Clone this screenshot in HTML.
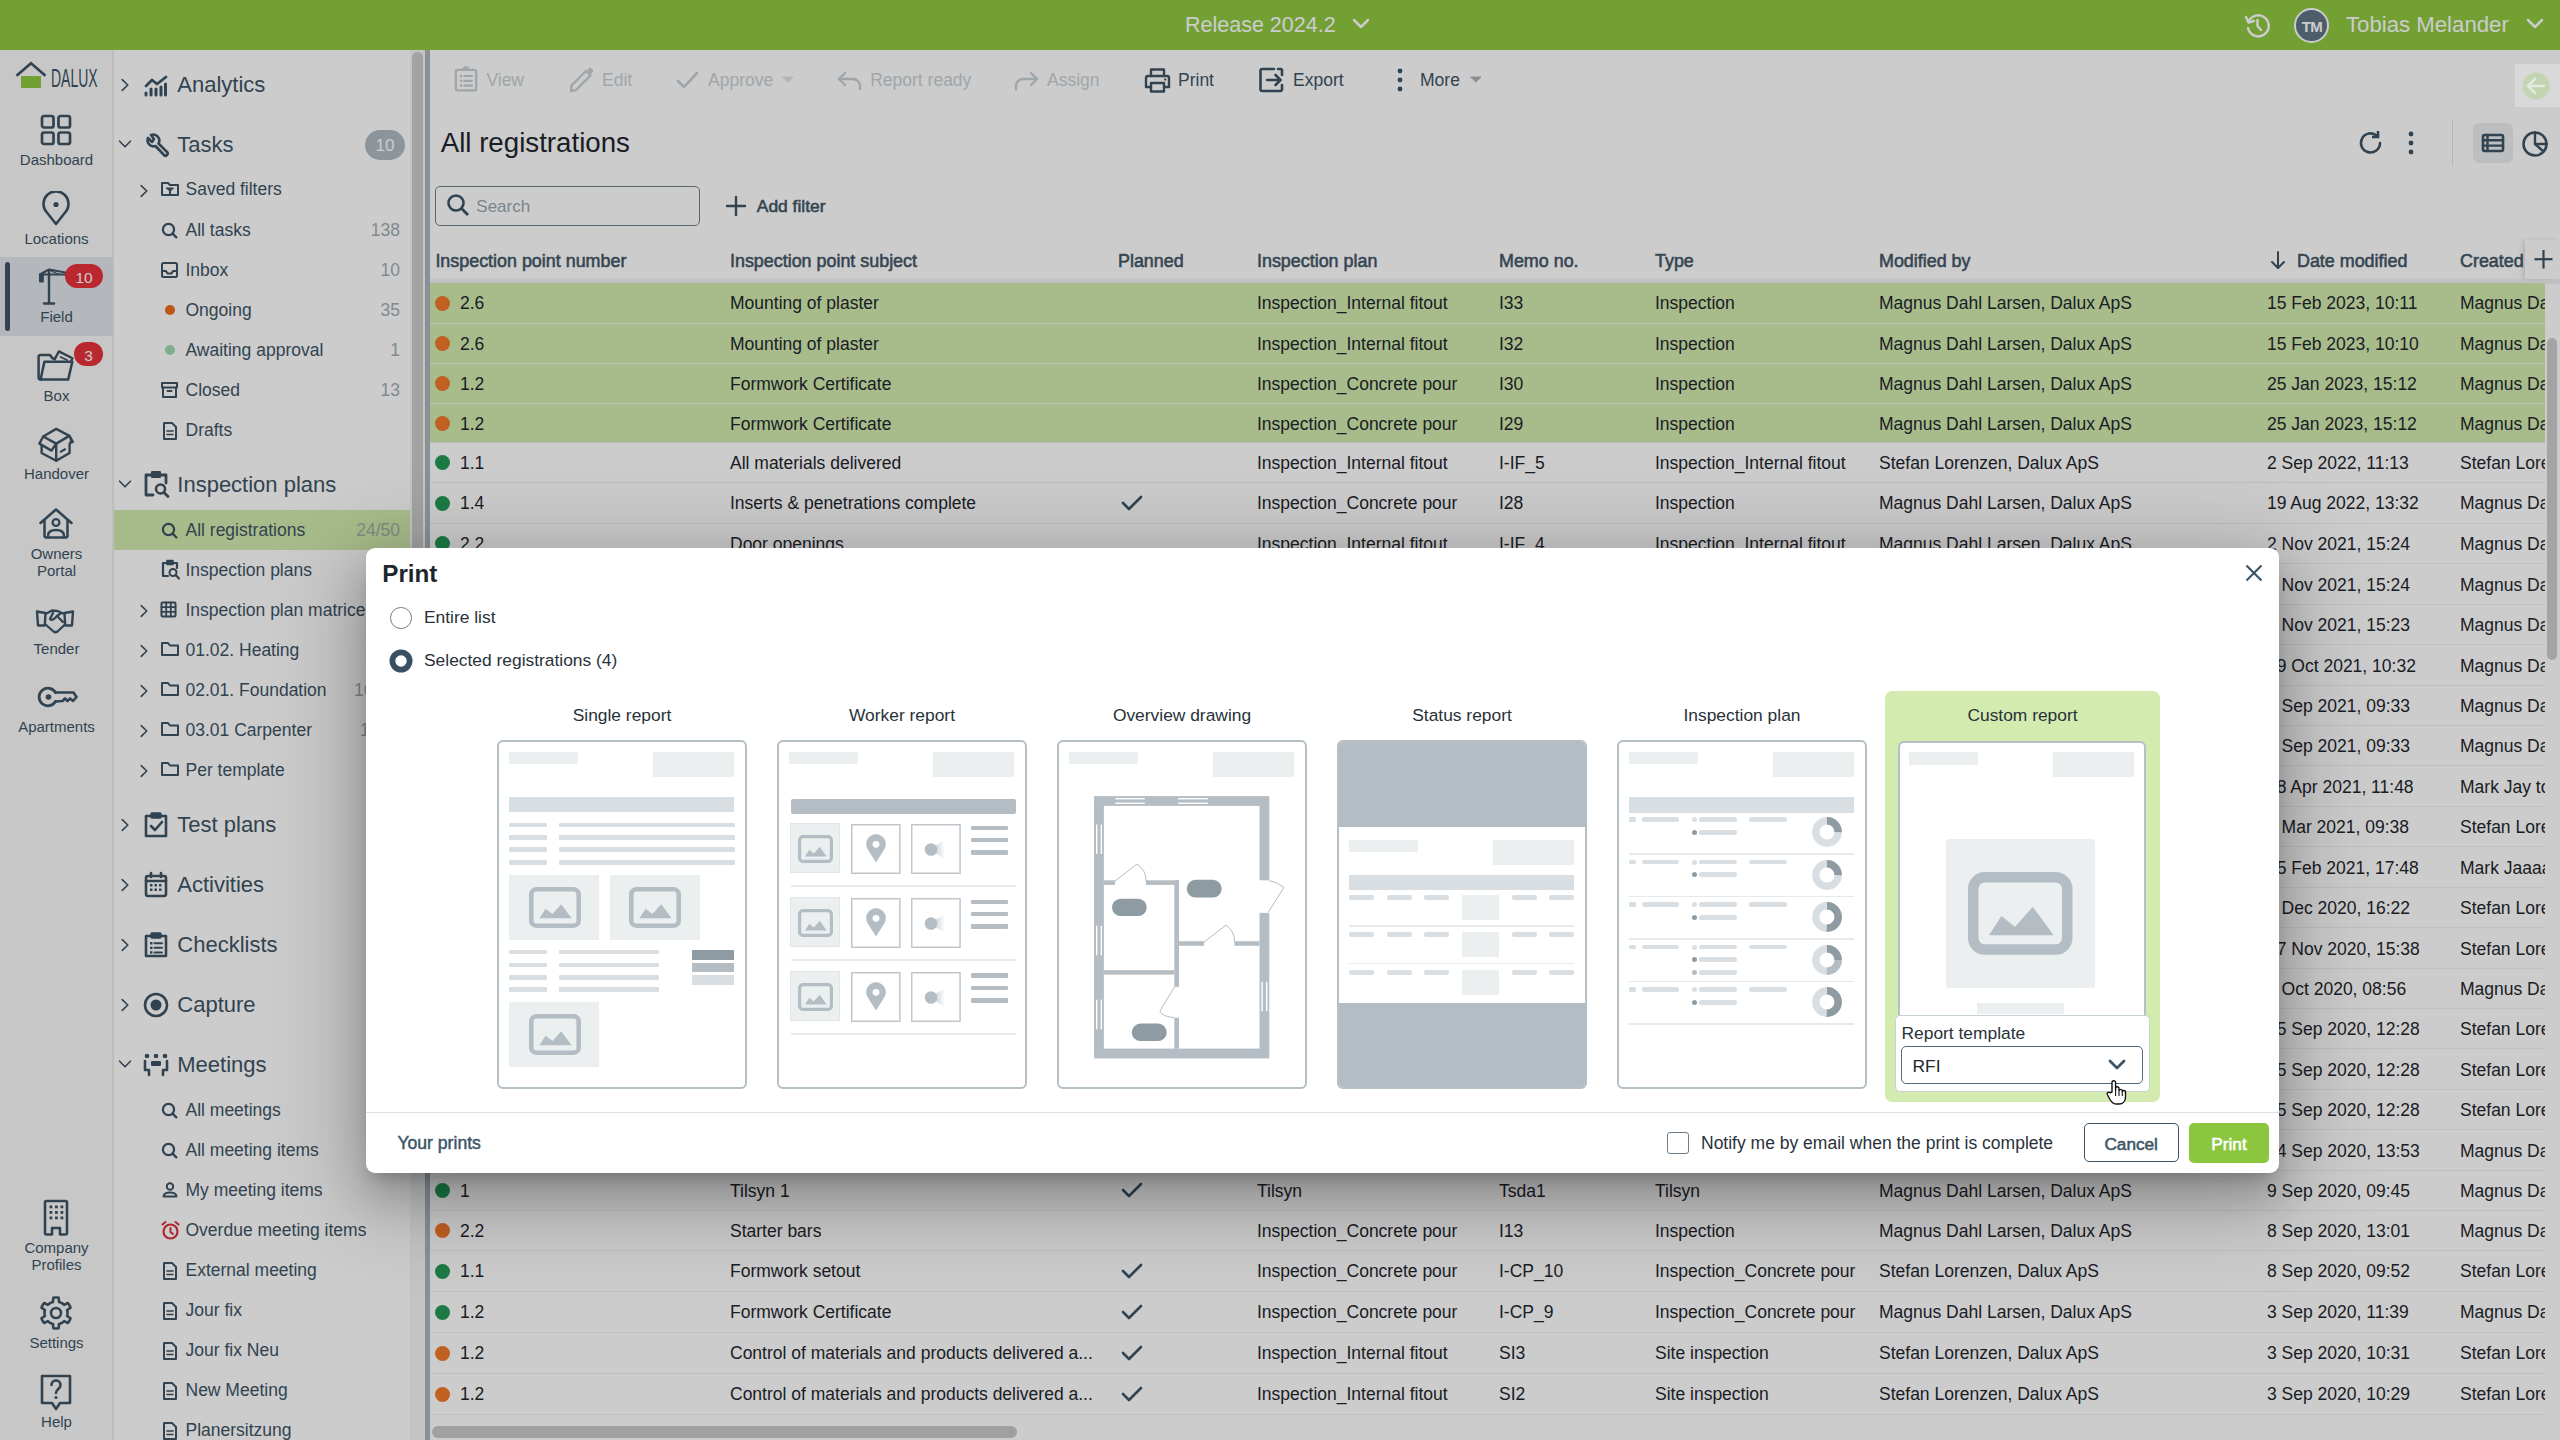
<!DOCTYPE html><html><head><meta charset="utf-8"><style>
html,body{margin:0;padding:0;}
body{width:2560px;height:1440px;overflow:hidden;position:relative;background:#fff;font-family:"Liberation Sans", sans-serif;}
.t{position:absolute;white-space:nowrap;line-height:1;}
.r{position:absolute;}
</style></head><body>
<div class="r" style="left:0.00px;top:0.00px;width:2560.00px;height:50.00px;background:#8fc83f;"></div>
<div class="t" style="left:1185.00px;top:15.10px;font-size:21.5px;color:#ffffff;font-weight:400;">Release 2024.2</div>
<svg class="r" style="left:1350.00px;top:16.00px;" width="22" height="16" viewBox="0 0 22 16" fill="none" stroke="#3e5465" stroke-width="2" stroke-linecap="round" stroke-linejoin="round"><polyline points="4,4 11,11 18,4" stroke="#fff" stroke-width="2.5"/></svg>
<svg class="r" style="left:2240.00px;top:8.00px;" width="34" height="34" viewBox="0 0 34 34" fill="none" stroke="#3e5465" stroke-width="2" stroke-linecap="round" stroke-linejoin="round"><path d="M8.5 14 A10.5 10.5 0 1 1 8 20" stroke="#fff" stroke-width="2.5"/><polyline points="6,9 8.5,14.5 14,13" stroke="#fff" stroke-width="2.5"/><polyline points="17.5,12 17.5,18 21,22" stroke="#fff" stroke-width="2.5"/></svg>
<div class="r" style="left:2294px;top:8px;width:31px;height:31px;border-radius:50%;background:#607686;border:2.5px solid #fff;"></div>
<div class="t" style="left:1812.00px;width:1000px;text-align:center;top:19.10px;font-size:15px;color:#ffffff;font-weight:700;letter-spacing:-0.5px;">TM</div>
<div class="t" style="left:2346.00px;top:13.71px;font-size:22.2px;color:#ffffff;font-weight:400;">Tobias Melander</div>
<svg class="r" style="left:2524.00px;top:16.00px;" width="22" height="16" viewBox="0 0 22 16" fill="none" stroke="#3e5465" stroke-width="2" stroke-linecap="round" stroke-linejoin="round"><polyline points="4,4 11,11 18,4" stroke="#fff" stroke-width="2.5"/></svg>
<div class="r" style="left:0.00px;top:50.00px;width:113.00px;height:1390.00px;background:#f9f9f9;"></div>
<div class="r" style="left:112.00px;top:50.00px;width:1.50px;height:1390.00px;background:#eeeeee;"></div>
<svg class="r" style="left:10.00px;top:58.00px;" width="44" height="34" viewBox="0 0 44 34" fill="none" stroke="#3e5465" stroke-width="2" stroke-linecap="round" stroke-linejoin="round"><polyline points="6.5,17.8 21,5.3 35.5,17.8" stroke-width="2.7" stroke-linecap="butt" stroke-linejoin="miter"/><rect x="11" y="18" width="20" height="12" fill="#8fc83f" stroke="none"/></svg>
<div class="t" style="left:51px;top:66px;font-size:25px;color:#3e5465;transform:scaleX(0.56);transform-origin:0 0;letter-spacing:0px;">DALUX</div>
<svg class="r" style="left:40.00px;top:114.00px;stroke-width:2.7" width="32" height="32" viewBox="0 0 32 32" fill="none" stroke="#3e5465" stroke-width="2" stroke-linecap="round" stroke-linejoin="round"><rect x="2" y="2" width="11.5" height="11.5" rx="2"/><rect x="18.5" y="2" width="11.5" height="11.5" rx="2"/><rect x="2" y="18.5" width="11.5" height="11.5" rx="2"/><rect x="18.5" y="18.5" width="11.5" height="11.5" rx="2"/></svg>
<div class="t" style="left:-443.50px;width:1000px;text-align:center;top:152.30px;font-size:15px;color:#3e5465;font-weight:400;">Dashboard</div>
<svg class="r" style="left:40.00px;top:191.00px;" width="32" height="36" viewBox="0 0 32 36" fill="none" stroke="#3e5465" stroke-width="2" stroke-linecap="round" stroke-linejoin="round"><path d="M16 33 L6.5 21 A12.5 12.5 0 1 1 25.5 21 Z" stroke-width="2.6"/><circle cx="16" cy="13.5" r="2.6" fill="#3e5465" stroke="none"/></svg>
<div class="t" style="left:-443.50px;width:1000px;text-align:center;top:231.30px;font-size:15px;color:#3e5465;font-weight:400;">Locations</div>
<div class="r" style="left:0.00px;top:257.00px;width:113.00px;height:79.00px;background:#e2e6eb;"></div>
<div class="r" style="left:5.00px;top:262.00px;width:5.00px;height:69.00px;background:#3e5465;border-radius:3px;"></div>
<svg class="r" style="left:30.00px;top:260.00px;" width="50" height="50" viewBox="0 0 50 50" fill="none" stroke="#3e5465" stroke-width="2" stroke-linecap="round" stroke-linejoin="round"><line x1="19" y1="12" x2="19" y2="43" stroke-width="2.4"/><line x1="14" y1="43.5" x2="24" y2="43.5" stroke-width="2.4"/><polyline points="10,14.5 19,9.5 38,13" stroke-width="2.2"/><line x1="10" y1="14.5" x2="38" y2="14.5" stroke-width="2.2"/><rect x="9" y="14" width="4.8" height="8.5" rx="1.2" fill="#3e5465" stroke="none"/><line x1="19" y1="10" x2="29" y2="14.5" stroke-width="1.2"/></svg>
<div class="r" style="left:65px;top:264px;width:38px;height:24px;border-radius:12px;background:#e8323a;"></div>
<div class="t" style="left:-416.00px;width:1000px;text-align:center;top:270.18px;font-size:15.5px;color:#ffffff;font-weight:400;">10</div>
<div class="t" style="left:-443.50px;width:1000px;text-align:center;top:309.30px;font-size:15px;color:#3e5465;font-weight:400;">Field</div>
<svg class="r" style="left:30.00px;top:340.00px;" width="50" height="50" viewBox="0 0 50 50" fill="none" stroke="#3e5465" stroke-width="2" stroke-linecap="round" stroke-linejoin="round"><path d="M10.6 39.6 Q8.6 39.6 8.6 37.6 L8.6 16.8 Q8.6 14.9 10.6 14.9 L19.8 14.9 L22.6 18.4 L24.4 18.4" stroke-width="2.5"/><path d="M10.6 39.6 L14.4 21.8 L42.3 21.8 L38.2 39.6 Z" stroke-width="2.5"/><path d="M24.6 19.4 L28.9 11.4 L42.4 18.2 L41.4 21" stroke-width="2.4"/><line x1="30.5" y1="17" x2="37" y2="20" stroke-width="1.8"/></svg>
<div class="r" style="left:74px;top:342px;width:29px;height:24px;border-radius:12px;background:#e8323a;"></div>
<div class="t" style="left:-411.50px;width:1000px;text-align:center;top:348.18px;font-size:15.5px;color:#ffffff;font-weight:400;">3</div>
<div class="t" style="left:-443.50px;width:1000px;text-align:center;top:388.30px;font-size:15px;color:#3e5465;font-weight:400;">Box</div>
<svg class="r" style="left:30.00px;top:420.00px;" width="50" height="50" viewBox="0 0 50 50" fill="none" stroke="#3e5465" stroke-width="2" stroke-linecap="round" stroke-linejoin="round"><path d="M13.2 16.5 L26.2 8.9 L39.4 15.9 L26.2 23.6 Z" stroke-width="2.4"/><path d="M13.2 16.5 L9.4 23.6 L21.5 30.6 L26.2 23.6" stroke-width="2.4"/><path d="M11.6 26 L11.6 33 L26.2 40.8 L39.6 33 L39.6 24" stroke-width="2.4"/><line x1="26.2" y1="23.6" x2="26.2" y2="40.8" stroke-width="2.4"/><path d="M39.4 15.9 L42.8 21.8 L40 23" stroke-width="2.4" fill="#3e5465"/><line x1="30.8" y1="31.6" x2="35" y2="29.3" stroke-width="2.2"/></svg>
<div class="t" style="left:-443.50px;width:1000px;text-align:center;top:466.30px;font-size:15px;color:#3e5465;font-weight:400;">Handover</div>
<svg class="r" style="left:30.00px;top:500.00px;" width="52" height="44" viewBox="0 0 52 44" fill="none" stroke="#3e5465" stroke-width="2" stroke-linecap="round" stroke-linejoin="round"><polyline points="10.5,23 26,9.5 41.5,23" stroke-width="2.5"/><path d="M14.5 20 L14.5 35.5 Q14.5 37.5 16.5 37.5 L35.5 37.5 Q37.5 37.5 37.5 35.5 L37.5 20" stroke-width="2.5"/><circle cx="26" cy="22.5" r="3.4" stroke-width="2.3"/><path d="M18 36 Q18 30 26 30 Q34 30 34 36" stroke-width="2.3"/></svg>
<div class="t" style="left:-443.50px;width:1000px;text-align:center;top:545.80px;font-size:15px;color:#3e5465;font-weight:400;">Owners</div>
<div class="t" style="left:-443.50px;width:1000px;text-align:center;top:562.80px;font-size:15px;color:#3e5465;font-weight:400;">Portal</div>
<svg class="r" style="left:30.00px;top:600.00px;" width="50" height="40" viewBox="0 0 50 40" fill="none" stroke="#3e5465" stroke-width="2" stroke-linecap="round" stroke-linejoin="round"><path d="M7 11.5 L15.5 13 L14.8 25.5 L8 25.5 Z" stroke-width="2.4"/><path d="M43 11.5 L34.5 13 L35.2 25.5 L42 25.5 Z" stroke-width="2.4"/><path d="M15.5 14 L22 10.5 L27.5 11 L34.5 14 M15 24 L23.5 31.5 Q25.5 33 27.5 31.5 L35 24.5 M23 13 L20 19 Q22 21 24.5 18.5 L27 16 L33 22 M27 16 L31 13" stroke-width="2.3"/></svg>
<div class="t" style="left:-443.50px;width:1000px;text-align:center;top:641.30px;font-size:15px;color:#3e5465;font-weight:400;">Tender</div>
<svg class="r" style="left:33.00px;top:680.00px;" width="50" height="34" viewBox="0 0 50 34" fill="none" stroke="#3e5465" stroke-width="2" stroke-linecap="round" stroke-linejoin="round"><path d="M22.5 12.5 A8.8 8.8 0 1 0 22.5 21.5" stroke-width="2.8"/><circle cx="15.5" cy="17" r="2.8" fill="#3e5465" stroke="none"/><path d="M22.5 12.5 L40.5 12.5 L43.5 17 L40 21 L37 18.5 L34.5 21 L32 18.5 L29.5 21 L22.5 21.5" stroke-width="2.6"/></svg>
<div class="t" style="left:-443.50px;width:1000px;text-align:center;top:719.30px;font-size:15px;color:#3e5465;font-weight:400;">Apartments</div>
<svg class="r" style="left:40.00px;top:1198.00px;" width="32" height="40" viewBox="0 0 32 40" fill="none" stroke="#3e5465" stroke-width="2" stroke-linecap="round" stroke-linejoin="round"><path d="M5 35 L5 4.5 Q5 3 6.5 3 L25.5 3 Q27 3 27 4.5 L27 35 Q27 36.5 25.5 36.5 L20 36.5 L20 30 L12 30 L12 36.5 L6.5 36.5 Q5 36.5 5 35 Z" stroke-width="2.6"/><rect x="9.5" y="7.5" width="2.8" height="2.8" fill="#3e5465" stroke="none"/><rect x="15.0" y="7.5" width="2.8" height="2.8" fill="#3e5465" stroke="none"/><rect x="20.5" y="7.5" width="2.8" height="2.8" fill="#3e5465" stroke="none"/><rect x="9.5" y="13.0" width="2.8" height="2.8" fill="#3e5465" stroke="none"/><rect x="15.0" y="13.0" width="2.8" height="2.8" fill="#3e5465" stroke="none"/><rect x="20.5" y="13.0" width="2.8" height="2.8" fill="#3e5465" stroke="none"/><rect x="9.5" y="18.5" width="2.8" height="2.8" fill="#3e5465" stroke="none"/><rect x="15.0" y="18.5" width="2.8" height="2.8" fill="#3e5465" stroke="none"/><rect x="20.5" y="18.5" width="2.8" height="2.8" fill="#3e5465" stroke="none"/></svg>
<div class="t" style="left:-443.50px;width:1000px;text-align:center;top:1240.30px;font-size:15px;color:#3e5465;font-weight:400;">Company</div>
<div class="t" style="left:-443.50px;width:1000px;text-align:center;top:1257.30px;font-size:15px;color:#3e5465;font-weight:400;">Profiles</div>
<svg class="r" style="left:38.00px;top:1295.00px;" width="36" height="36" viewBox="0 0 36 36" fill="none" stroke="#3e5465" stroke-width="2" stroke-linecap="round" stroke-linejoin="round"><polygon points="18.00,2.50 19.35,2.56 20.69,2.74 20.98,6.89 21.93,7.19 22.86,7.58 23.75,8.04 24.60,8.58 25.39,9.19 26.13,9.87 29.87,8.04 30.70,9.11 31.42,10.25 32.05,11.45 32.57,12.70 29.11,15.02 29.33,16.00 29.46,17.00 29.50,18.00 29.46,19.00 29.33,20.00 29.11,20.98 32.57,23.30 32.05,24.55 31.42,25.75 30.70,26.89 29.87,27.96 26.13,26.13 25.39,26.81 24.60,27.42 23.75,27.96 22.86,28.42 21.93,28.81 20.98,29.11 20.69,33.26 19.35,33.44 18.00,33.50 16.65,33.44 15.31,33.26 15.02,29.11 14.07,28.81 13.14,28.42 12.25,27.96 11.40,27.42 10.61,26.81 9.87,26.13 6.13,27.96 5.30,26.89 4.58,25.75 3.95,24.55 3.43,23.30 6.89,20.98 6.67,20.00 6.54,19.00 6.50,18.00 6.54,17.00 6.67,16.00 6.89,15.02 3.43,12.70 3.95,11.45 4.58,10.25 5.30,9.11 6.13,8.04 9.87,9.87 10.61,9.19 11.40,8.58 12.25,8.04 13.14,7.58 14.07,7.19 15.02,6.89 15.31,2.74 16.65,2.56" stroke-width="2.6"/><circle cx="18" cy="18" r="5" stroke-width="2.6"/></svg>
<div class="t" style="left:-443.50px;width:1000px;text-align:center;top:1335.30px;font-size:15px;color:#3e5465;font-weight:400;">Settings</div>
<svg class="r" style="left:38.00px;top:1373.00px;" width="36" height="40" viewBox="0 0 36 40" fill="none" stroke="#3e5465" stroke-width="2" stroke-linecap="round" stroke-linejoin="round"><path d="M4 3 L32 3 L32 30 L22 30 L18 36 L14 30 L4 30 Z" stroke-width="2.6"/><path d="M13.5 12 C13.5 6 22.5 6 22.5 12 C22.5 16 18 16 18 20" stroke-width="2.6"/><circle cx="18" cy="24.5" r="1.6" fill="#3e5465" stroke="none"/></svg>
<div class="t" style="left:-443.50px;width:1000px;text-align:center;top:1414.30px;font-size:15px;color:#3e5465;font-weight:400;">Help</div>
<div class="r" style="left:113.50px;top:50.00px;width:296.50px;height:1390.00px;background:#ffffff;"></div>
<div class="r" style="left:410.00px;top:50.00px;width:15.00px;height:1390.00px;background:#f6f6f6;"></div>
<div class="r" style="left:412.00px;top:52.00px;width:11.00px;height:950.00px;background:#cccccc;border-radius:6px;"></div>
<div class="r" style="left:425.00px;top:50.00px;width:5.00px;height:1390.00px;background:#acb5be;"></div>
<svg class="r" style="left:119.00px;top:77.00px;" width="12" height="16" viewBox="0 0 12 16" fill="none" stroke="#3e5465" stroke-width="2" stroke-linecap="round" stroke-linejoin="round"><polyline points="3.2,2.6 8.8,8 3.2,13.4" stroke-width="1.6"/></svg>
<svg class="r" style="left:143.00px;top:74.00px;" width="26" height="24" viewBox="0 0 26 24" fill="none" stroke="#3e5465" stroke-width="2" stroke-linecap="round" stroke-linejoin="round"><polyline points="3,12 9,6 14,10 23,3" stroke-width="2.8"/><line x1="3" y1="19" x2="3" y2="21" stroke-width="3"/><line x1="8" y1="15" x2="8" y2="21" stroke-width="3"/><line x1="13" y1="15" x2="13" y2="21" stroke-width="3"/><line x1="18" y1="13" x2="18" y2="21" stroke-width="3"/><line x1="22.5" y1="10" x2="22.5" y2="21" stroke-width="3"/></svg>
<div class="t" style="left:177.30px;top:74.18px;font-size:22px;color:#3e5465;font-weight:400;">Analytics</div>
<svg class="r" style="left:117.00px;top:138.00px;" width="16" height="12" viewBox="0 0 16 12" fill="none" stroke="#3e5465" stroke-width="2" stroke-linecap="round" stroke-linejoin="round"><polyline points="2.6,3.2 8,8.8 13.4,3.2" stroke-width="1.6"/></svg>
<svg class="r" style="left:143.00px;top:132.00px;" width="26" height="26" viewBox="0 0 26 26" fill="none" stroke="#3e5465" stroke-width="2" stroke-linecap="round" stroke-linejoin="round"><path d="M5 6 A6 6 0 0 0 12.5 14 L21 23 A2 2 0 0 0 24 20 L15.5 11.5 A6 6 0 0 0 8 3 L11 7 L9 10 Z" stroke-width="2.6"/></svg>
<div class="t" style="left:177.30px;top:133.68px;font-size:22px;color:#3e5465;font-weight:400;">Tasks</div>
<div class="r" style="left:365px;top:129.5px;width:40px;height:30.5px;border-radius:15.25px;background:#afbbc4;"></div>
<div class="t" style="left:-115.00px;width:1000px;text-align:center;top:137.41px;font-size:17px;color:#ffffff;font-weight:400;">10</div>
<svg class="r" style="left:137.50px;top:182.50px;" width="12" height="16" viewBox="0 0 12 16" fill="none" stroke="#3e5465" stroke-width="2" stroke-linecap="round" stroke-linejoin="round"><polyline points="3.2,2.6 8.8,8 3.2,13.4" stroke-width="1.6"/></svg>
<svg class="r" style="left:160.00px;top:180.50px;" width="20" height="16" viewBox="0 0 20 16" fill="none" stroke="#3e5465" stroke-width="2" stroke-linecap="round" stroke-linejoin="round"><path d="M2 14 L2 2 L8 2 L10 4 L18 4 L18 14 Z" stroke-width="2"/><path d="M6.5 7 L13.5 7 L10.5 10 L10.5 13 L9.5 13 L9.5 10 Z" fill="#3e5465" stroke-width="1"/></svg>
<div class="t" style="left:185.50px;top:181.49px;font-size:17.5px;color:#3e5465;font-weight:400;">Saved filters</div>
<svg class="r" style="left:160.00px;top:221.00px;" width="20" height="20" viewBox="0 0 20 20" fill="none" stroke="#3e5465" stroke-width="2" stroke-linecap="round" stroke-linejoin="round"><circle cx="8.5" cy="8.5" r="5.6" stroke-width="2.2"/><line x1="12.6" y1="12.6" x2="17" y2="17" stroke-width="2.4" stroke-linecap="butt"/></svg>
<div class="t" style="left:185.50px;top:221.99px;font-size:17.5px;color:#3e5465;font-weight:400;">All tasks</div>
<div class="t" style="left:-600.00px;width:1000px;text-align:right;top:221.99px;font-size:17.5px;color:#a2adb5;font-weight:400;">138</div>
<svg class="r" style="left:160.00px;top:261.00px;" width="20" height="18" viewBox="0 0 20 18" fill="none" stroke="#3e5465" stroke-width="2" stroke-linecap="round" stroke-linejoin="round"><rect x="2" y="2" width="15" height="14" rx="1.5" stroke-width="2"/><polyline points="2,10 6,10 7.5,12.5 11.5,12.5 13,10 17,10" stroke-width="2"/></svg>
<div class="t" style="left:185.50px;top:261.99px;font-size:17.5px;color:#3e5465;font-weight:400;">Inbox</div>
<div class="t" style="left:-600.00px;width:1000px;text-align:right;top:261.99px;font-size:17.5px;color:#a2adb5;font-weight:400;">10</div>
<div class="r" style="left:165px;top:304.50px;width:10px;height:10px;border-radius:50%;background:#ee6a1d;"></div>
<div class="t" style="left:185.50px;top:301.99px;font-size:17.5px;color:#3e5465;font-weight:400;">Ongoing</div>
<div class="t" style="left:-600.00px;width:1000px;text-align:right;top:301.99px;font-size:17.5px;color:#a2adb5;font-weight:400;">35</div>
<div class="r" style="left:165px;top:344.50px;width:10px;height:10px;border-radius:50%;background:#9edcb2;"></div>
<div class="t" style="left:185.50px;top:341.99px;font-size:17.5px;color:#3e5465;font-weight:400;">Awaiting approval</div>
<div class="t" style="left:-600.00px;width:1000px;text-align:right;top:341.99px;font-size:17.5px;color:#a2adb5;font-weight:400;">1</div>
<svg class="r" style="left:160.00px;top:381.00px;" width="20" height="18" viewBox="0 0 20 18" fill="none" stroke="#3e5465" stroke-width="2" stroke-linecap="round" stroke-linejoin="round"><rect x="2" y="2" width="15" height="4.5" stroke-width="2"/><path d="M3 6.5 L3 16 L16 16 L16 6.5" stroke-width="2"/><line x1="7.5" y1="10" x2="11.5" y2="10" stroke-width="2"/></svg>
<div class="t" style="left:185.50px;top:381.99px;font-size:17.5px;color:#3e5465;font-weight:400;">Closed</div>
<div class="t" style="left:-600.00px;width:1000px;text-align:right;top:381.99px;font-size:17.5px;color:#a2adb5;font-weight:400;">13</div>
<svg class="r" style="left:161.00px;top:420.50px;" width="18" height="20" viewBox="0 0 18 20" fill="none" stroke="#3e5465" stroke-width="2" stroke-linecap="round" stroke-linejoin="round"><path d="M3 2 L11 2 L15 6 L15 18 L3 18 Z" stroke-width="2"/><line x1="6" y1="10" x2="12" y2="10" stroke-width="1.6"/><line x1="6" y1="13.5" x2="12" y2="13.5" stroke-width="1.6"/></svg>
<div class="t" style="left:185.50px;top:421.99px;font-size:17.5px;color:#3e5465;font-weight:400;">Drafts</div>
<svg class="r" style="left:117.00px;top:478.00px;" width="16" height="12" viewBox="0 0 16 12" fill="none" stroke="#3e5465" stroke-width="2" stroke-linecap="round" stroke-linejoin="round"><polyline points="2.6,3.2 8,8.8 13.4,3.2" stroke-width="1.6"/></svg>
<svg class="r" style="left:143.00px;top:470.00px;" width="28" height="28" viewBox="0 0 28 28" fill="none" stroke="#3e5465" stroke-width="2" stroke-linecap="round" stroke-linejoin="round"><path d="M10 25 L3 25 L3 5 L23 5 L23 13" stroke-width="2.8"/><rect x="9" y="2" width="8" height="5" fill="#3e5465" stroke-width="2"/><circle cx="17.5" cy="19" r="4.5" stroke-width="2.6"/><line x1="21" y1="22.5" x2="25" y2="26.5" stroke-width="2.8"/></svg>
<div class="t" style="left:177.30px;top:474.28px;font-size:22px;color:#3e5465;font-weight:400;">Inspection plans</div>
<div class="r" style="left:113.50px;top:510.00px;width:296.50px;height:39.75px;background:#d3ebae;"></div>
<svg class="r" style="left:160.00px;top:520.90px;" width="20" height="20" viewBox="0 0 20 20" fill="none" stroke="#3e5465" stroke-width="2" stroke-linecap="round" stroke-linejoin="round"><circle cx="8.5" cy="8.5" r="5.6" stroke-width="2.2"/><line x1="12.6" y1="12.6" x2="17" y2="17" stroke-width="2.4" stroke-linecap="butt"/></svg>
<div class="t" style="left:185.50px;top:521.89px;font-size:17.5px;color:#3e5465;font-weight:400;">All registrations</div>
<div class="t" style="left:-600.00px;width:1000px;text-align:right;top:521.89px;font-size:17.5px;color:#9fb0a3;font-weight:400;">24/50</div>
<svg class="r" style="left:159.50px;top:558.60px;" width="22" height="22" viewBox="0 0 22 22" fill="none" stroke="#3e5465" stroke-width="2" stroke-linecap="round" stroke-linejoin="round"><path d="M8 17 L3 17 L3 4 L17 4 L17 9" stroke-width="2.2"/><rect x="7" y="1.5" width="6" height="4" fill="#3e5465" stroke-width="1.5"/><circle cx="13" cy="13.5" r="3.5" stroke-width="2"/><line x1="15.6" y1="16" x2="19" y2="19.5" stroke-width="2.2"/></svg>
<div class="t" style="left:185.50px;top:561.59px;font-size:17.5px;color:#3e5465;font-weight:400;">Inspection plans</div>
<svg class="r" style="left:137.50px;top:602.60px;" width="12" height="16" viewBox="0 0 12 16" fill="none" stroke="#3e5465" stroke-width="2" stroke-linecap="round" stroke-linejoin="round"><polyline points="3.2,2.6 8.8,8 3.2,13.4" stroke-width="1.6"/></svg>
<svg class="r" style="left:160.00px;top:600.60px;" width="18" height="18" viewBox="0 0 18 18" fill="none" stroke="#3e5465" stroke-width="2" stroke-linecap="round" stroke-linejoin="round"><rect x="1.5" y="1.5" width="14" height="14" rx="1" stroke-width="2"/><line x1="6.2" y1="1.5" x2="6.2" y2="15.5" stroke-width="1.8"/><line x1="10.8" y1="1.5" x2="10.8" y2="15.5" stroke-width="1.8"/><line x1="1.5" y1="6.2" x2="15.5" y2="6.2" stroke-width="1.8"/><line x1="1.5" y1="10.8" x2="15.5" y2="10.8" stroke-width="1.8"/></svg>
<div class="t" style="left:185.50px;top:601.59px;font-size:17.5px;color:#3e5465;font-weight:400;">Inspection plan matrices</div>
<svg class="r" style="left:137.50px;top:642.60px;" width="12" height="16" viewBox="0 0 12 16" fill="none" stroke="#3e5465" stroke-width="2" stroke-linecap="round" stroke-linejoin="round"><polyline points="3.2,2.6 8.8,8 3.2,13.4" stroke-width="1.6"/></svg>
<svg class="r" style="left:160.00px;top:640.60px;" width="20" height="16" viewBox="0 0 20 16" fill="none" stroke="#3e5465" stroke-width="2" stroke-linecap="round" stroke-linejoin="round"><path d="M2 14 L2 2 L8 2 L10 4.5 L18 4.5 L18 14 Z" stroke-width="2"/></svg>
<div class="t" style="left:185.50px;top:641.59px;font-size:17.5px;color:#3e5465;font-weight:400;">01.02. Heating</div>
<div class="t" style="left:-600.00px;width:1000px;text-align:right;top:641.59px;font-size:17.5px;color:#a2adb5;font-weight:400;">4</div>
<svg class="r" style="left:137.50px;top:682.60px;" width="12" height="16" viewBox="0 0 12 16" fill="none" stroke="#3e5465" stroke-width="2" stroke-linecap="round" stroke-linejoin="round"><polyline points="3.2,2.6 8.8,8 3.2,13.4" stroke-width="1.6"/></svg>
<svg class="r" style="left:160.00px;top:680.60px;" width="20" height="16" viewBox="0 0 20 16" fill="none" stroke="#3e5465" stroke-width="2" stroke-linecap="round" stroke-linejoin="round"><path d="M2 14 L2 2 L8 2 L10 4.5 L18 4.5 L18 14 Z" stroke-width="2"/></svg>
<div class="t" style="left:185.50px;top:681.59px;font-size:17.5px;color:#3e5465;font-weight:400;">02.01. Foundation</div>
<div class="t" style="left:354.00px;top:681.59px;font-size:17.5px;color:#a2adb5;font-weight:400;">16</div>
<div class="t" style="left:360.00px;top:721.59px;font-size:17.5px;color:#a2adb5;font-weight:400;">1</div>
<svg class="r" style="left:137.50px;top:722.60px;" width="12" height="16" viewBox="0 0 12 16" fill="none" stroke="#3e5465" stroke-width="2" stroke-linecap="round" stroke-linejoin="round"><polyline points="3.2,2.6 8.8,8 3.2,13.4" stroke-width="1.6"/></svg>
<svg class="r" style="left:160.00px;top:720.60px;" width="20" height="16" viewBox="0 0 20 16" fill="none" stroke="#3e5465" stroke-width="2" stroke-linecap="round" stroke-linejoin="round"><path d="M2 14 L2 2 L8 2 L10 4.5 L18 4.5 L18 14 Z" stroke-width="2"/></svg>
<div class="t" style="left:185.50px;top:721.59px;font-size:17.5px;color:#3e5465;font-weight:400;">03.01 Carpenter</div>
<div class="t" style="left:-600.00px;width:1000px;text-align:right;top:721.59px;font-size:17.5px;color:#a2adb5;font-weight:400;">7</div>
<svg class="r" style="left:137.50px;top:762.60px;" width="12" height="16" viewBox="0 0 12 16" fill="none" stroke="#3e5465" stroke-width="2" stroke-linecap="round" stroke-linejoin="round"><polyline points="3.2,2.6 8.8,8 3.2,13.4" stroke-width="1.6"/></svg>
<svg class="r" style="left:160.00px;top:760.60px;" width="20" height="16" viewBox="0 0 20 16" fill="none" stroke="#3e5465" stroke-width="2" stroke-linecap="round" stroke-linejoin="round"><path d="M2 14 L2 2 L8 2 L10 4.5 L18 4.5 L18 14 Z" stroke-width="2"/></svg>
<div class="t" style="left:185.50px;top:761.59px;font-size:17.5px;color:#3e5465;font-weight:400;">Per template</div>
<svg class="r" style="left:119.00px;top:817.00px;" width="12" height="16" viewBox="0 0 12 16" fill="none" stroke="#3e5465" stroke-width="2" stroke-linecap="round" stroke-linejoin="round"><polyline points="3.2,2.6 8.8,8 3.2,13.4" stroke-width="1.6"/></svg>
<svg class="r" style="left:143.00px;top:811.00px;" width="26" height="28" viewBox="0 0 26 28" fill="none" stroke="#3e5465" stroke-width="2" stroke-linecap="round" stroke-linejoin="round"><path d="M7 5 L3 5 L3 25 L23 25 L23 5 L19 5" stroke-width="2.6"/><rect x="8" y="2" width="10" height="5" rx="1" fill="#3e5465" stroke-width="1.6"/><polyline points="8,15 12,19 19,11" stroke-width="2.6"/></svg>
<div class="t" style="left:177.30px;top:814.18px;font-size:22px;color:#3e5465;font-weight:400;">Test plans</div>
<svg class="r" style="left:119.00px;top:877.00px;" width="12" height="16" viewBox="0 0 12 16" fill="none" stroke="#3e5465" stroke-width="2" stroke-linecap="round" stroke-linejoin="round"><polyline points="3.2,2.6 8.8,8 3.2,13.4" stroke-width="1.6"/></svg>
<svg class="r" style="left:143.00px;top:871.00px;" width="26" height="28" viewBox="0 0 26 28" fill="none" stroke="#3e5465" stroke-width="2" stroke-linecap="round" stroke-linejoin="round"><rect x="3" y="5" width="20" height="20" rx="2" stroke-width="2.6"/><line x1="3" y1="10" x2="23" y2="10" stroke-width="2.6"/><line x1="8" y1="2" x2="8" y2="6" stroke-width="2.6"/><line x1="18" y1="2" x2="18" y2="6" stroke-width="2.6"/><rect x="7.0" y="13.0" width="2.5" height="2.5" fill="#3e5465" stroke="none"/><rect x="11.5" y="13.0" width="2.5" height="2.5" fill="#3e5465" stroke="none"/><rect x="16.0" y="13.0" width="2.5" height="2.5" fill="#3e5465" stroke="none"/><rect x="7.0" y="17.5" width="2.5" height="2.5" fill="#3e5465" stroke="none"/><rect x="11.5" y="17.5" width="2.5" height="2.5" fill="#3e5465" stroke="none"/><rect x="16.0" y="17.5" width="2.5" height="2.5" fill="#3e5465" stroke="none"/></svg>
<div class="t" style="left:177.30px;top:874.18px;font-size:22px;color:#3e5465;font-weight:400;">Activities</div>
<svg class="r" style="left:119.00px;top:937.00px;" width="12" height="16" viewBox="0 0 12 16" fill="none" stroke="#3e5465" stroke-width="2" stroke-linecap="round" stroke-linejoin="round"><polyline points="3.2,2.6 8.8,8 3.2,13.4" stroke-width="1.6"/></svg>
<svg class="r" style="left:143.00px;top:931.00px;" width="26" height="28" viewBox="0 0 26 28" fill="none" stroke="#3e5465" stroke-width="2" stroke-linecap="round" stroke-linejoin="round"><path d="M7 5 L3 5 L3 25 L23 25 L23 5 L19 5" stroke-width="2.6"/><rect x="8" y="2" width="10" height="5" rx="1" fill="#3e5465" stroke-width="1.6"/><rect x="7" y="11.0" width="2.5" height="2.5" fill="#3e5465" stroke="none"/><line x1="11.5" y1="12.2" x2="19" y2="12.2" stroke-width="2"/><rect x="7" y="15.6" width="2.5" height="2.5" fill="#3e5465" stroke="none"/><line x1="11.5" y1="16.8" x2="19" y2="16.8" stroke-width="2"/><rect x="7" y="20.2" width="2.5" height="2.5" fill="#3e5465" stroke="none"/><line x1="11.5" y1="21.4" x2="19" y2="21.4" stroke-width="2"/></svg>
<div class="t" style="left:177.30px;top:934.18px;font-size:22px;color:#3e5465;font-weight:400;">Checklists</div>
<svg class="r" style="left:119.00px;top:997.00px;" width="12" height="16" viewBox="0 0 12 16" fill="none" stroke="#3e5465" stroke-width="2" stroke-linecap="round" stroke-linejoin="round"><polyline points="3.2,2.6 8.8,8 3.2,13.4" stroke-width="1.6"/></svg>
<svg class="r" style="left:143.00px;top:991.00px;" width="26" height="28" viewBox="0 0 26 28" fill="none" stroke="#3e5465" stroke-width="2" stroke-linecap="round" stroke-linejoin="round"><circle cx="13" cy="14" r="11" stroke-width="2.6"/><circle cx="13" cy="14" r="5.5" fill="#3e5465" stroke="none"/></svg>
<div class="t" style="left:177.30px;top:994.18px;font-size:22px;color:#3e5465;font-weight:400;">Capture</div>
<svg class="r" style="left:117.00px;top:1058.00px;" width="16" height="12" viewBox="0 0 16 12" fill="none" stroke="#3e5465" stroke-width="2" stroke-linecap="round" stroke-linejoin="round"><polyline points="2.6,3.2 8,8.8 13.4,3.2" stroke-width="1.6"/></svg>
<svg class="r" style="left:142.00px;top:1052.00px;" width="28" height="26" viewBox="0 0 28 26" fill="none" stroke="#3e5465" stroke-width="2" stroke-linecap="round" stroke-linejoin="round"><circle cx="5" cy="4" r="2.3" fill="#3e5465" stroke="none"/><circle cx="14" cy="4" r="2.3" fill="#3e5465" stroke="none"/><circle cx="23" cy="4" r="2.3" fill="#3e5465" stroke="none"/><path d="M3 9 L3 18 L7 18 L7 23" stroke-width="2.6"/><path d="M25 9 L25 18 L21 18 L21 23" stroke-width="2.6"/><rect x="9" y="9" width="10" height="5" rx="1" fill="#3e5465" stroke="none"/><line x1="7" y1="16" x2="21" y2="16" stroke-width="0"/></svg>
<div class="t" style="left:177.30px;top:1054.38px;font-size:22px;color:#3e5465;font-weight:400;">Meetings</div>
<svg class="r" style="left:160.00px;top:1101.00px;" width="20" height="20" viewBox="0 0 20 20" fill="none" stroke="#3e5465" stroke-width="2" stroke-linecap="round" stroke-linejoin="round"><circle cx="8.5" cy="8.5" r="5.6" stroke-width="2.2"/><line x1="12.6" y1="12.6" x2="17" y2="17" stroke-width="2.4" stroke-linecap="butt"/></svg>
<div class="t" style="left:185.50px;top:1101.99px;font-size:17.5px;color:#3e5465;font-weight:400;">All meetings</div>
<svg class="r" style="left:160.00px;top:1141.00px;" width="20" height="20" viewBox="0 0 20 20" fill="none" stroke="#3e5465" stroke-width="2" stroke-linecap="round" stroke-linejoin="round"><circle cx="8.5" cy="8.5" r="5.6" stroke-width="2.2"/><line x1="12.6" y1="12.6" x2="17" y2="17" stroke-width="2.4" stroke-linecap="butt"/></svg>
<div class="t" style="left:185.50px;top:1141.99px;font-size:17.5px;color:#3e5465;font-weight:400;">All meeting items</div>
<svg class="r" style="left:161.00px;top:1181.00px;" width="18" height="18" viewBox="0 0 18 18" fill="none" stroke="#3e5465" stroke-width="2" stroke-linecap="round" stroke-linejoin="round"><circle cx="9" cy="5.5" r="3.2" stroke-width="2"/><path d="M2.5 15.5 C2.5 10 15.5 10 15.5 15.5 Z" stroke-width="2"/></svg>
<div class="t" style="left:185.50px;top:1181.99px;font-size:17.5px;color:#3e5465;font-weight:400;">My meeting items</div>
<svg class="r" style="left:159.50px;top:1220.00px;" width="21" height="21" viewBox="0 0 21 21" fill="none" stroke="#3e5465" stroke-width="2" stroke-linecap="round" stroke-linejoin="round"><circle cx="10.5" cy="11.5" r="7" stroke="#d9313a" stroke-width="2.2"/><polyline points="10.5,8 10.5,12 13,14" stroke="#d9313a" stroke-width="2"/><line x1="2.5" y1="4.5" x2="5.5" y2="2" stroke="#d9313a" stroke-width="2"/><line x1="18.5" y1="4.5" x2="15.5" y2="2" stroke="#d9313a" stroke-width="2"/></svg>
<div class="t" style="left:185.50px;top:1221.99px;font-size:17.5px;color:#3e5465;font-weight:400;">Overdue meeting items</div>
<svg class="r" style="left:161.00px;top:1260.50px;" width="18" height="20" viewBox="0 0 18 20" fill="none" stroke="#3e5465" stroke-width="2" stroke-linecap="round" stroke-linejoin="round"><path d="M3 2 L11 2 L15 6 L15 18 L3 18 Z" stroke-width="2"/><line x1="6" y1="10" x2="12" y2="10" stroke-width="1.6"/><line x1="6" y1="13.5" x2="12" y2="13.5" stroke-width="1.6"/></svg>
<div class="t" style="left:185.50px;top:1261.99px;font-size:17.5px;color:#3e5465;font-weight:400;">External meeting</div>
<svg class="r" style="left:161.00px;top:1300.50px;" width="18" height="20" viewBox="0 0 18 20" fill="none" stroke="#3e5465" stroke-width="2" stroke-linecap="round" stroke-linejoin="round"><path d="M3 2 L11 2 L15 6 L15 18 L3 18 Z" stroke-width="2"/><line x1="6" y1="10" x2="12" y2="10" stroke-width="1.6"/><line x1="6" y1="13.5" x2="12" y2="13.5" stroke-width="1.6"/></svg>
<div class="t" style="left:185.50px;top:1301.99px;font-size:17.5px;color:#3e5465;font-weight:400;">Jour fix</div>
<svg class="r" style="left:161.00px;top:1340.50px;" width="18" height="20" viewBox="0 0 18 20" fill="none" stroke="#3e5465" stroke-width="2" stroke-linecap="round" stroke-linejoin="round"><path d="M3 2 L11 2 L15 6 L15 18 L3 18 Z" stroke-width="2"/><line x1="6" y1="10" x2="12" y2="10" stroke-width="1.6"/><line x1="6" y1="13.5" x2="12" y2="13.5" stroke-width="1.6"/></svg>
<div class="t" style="left:185.50px;top:1341.99px;font-size:17.5px;color:#3e5465;font-weight:400;">Jour fix Neu</div>
<svg class="r" style="left:161.00px;top:1380.50px;" width="18" height="20" viewBox="0 0 18 20" fill="none" stroke="#3e5465" stroke-width="2" stroke-linecap="round" stroke-linejoin="round"><path d="M3 2 L11 2 L15 6 L15 18 L3 18 Z" stroke-width="2"/><line x1="6" y1="10" x2="12" y2="10" stroke-width="1.6"/><line x1="6" y1="13.5" x2="12" y2="13.5" stroke-width="1.6"/></svg>
<div class="t" style="left:185.50px;top:1381.99px;font-size:17.5px;color:#3e5465;font-weight:400;">New Meeting</div>
<svg class="r" style="left:161.00px;top:1420.50px;" width="18" height="20" viewBox="0 0 18 20" fill="none" stroke="#3e5465" stroke-width="2" stroke-linecap="round" stroke-linejoin="round"><path d="M3 2 L11 2 L15 6 L15 18 L3 18 Z" stroke-width="2"/><line x1="6" y1="10" x2="12" y2="10" stroke-width="1.6"/><line x1="6" y1="13.5" x2="12" y2="13.5" stroke-width="1.6"/></svg>
<div class="t" style="left:185.50px;top:1421.99px;font-size:17.5px;color:#3e5465;font-weight:400;">Planersitzung</div>
<div class="r" style="left:430.00px;top:50.00px;width:2130.00px;height:1390.00px;background:#ffffff;"></div>
<svg class="r" style="left:452.00px;top:64.00px;" width="28" height="30" viewBox="0 0 28 30" fill="none" stroke="#3e5465" stroke-width="2" stroke-linecap="round" stroke-linejoin="round"><rect x="3.8" y="5.8" width="20.4" height="20.6" rx="2" stroke="#c7d0d5" stroke-width="2.3"/><path d="M11.5 5.8 A2.5 2.5 0 0 1 16.5 5.8" stroke="#c7d0d5" stroke-width="2.3"/><rect x="8" y="10.8" width="2.4" height="2.4" fill="#c7d0d5" stroke="none"/><line x1="12.5" y1="12.0" x2="20" y2="12.0" stroke="#c7d0d5" stroke-width="2.2"/><rect x="8" y="15.6" width="2.4" height="2.4" fill="#c7d0d5" stroke="none"/><line x1="12.5" y1="16.8" x2="20" y2="16.8" stroke="#c7d0d5" stroke-width="2.2"/><rect x="8" y="20.4" width="2.4" height="2.4" fill="#c7d0d5" stroke="none"/><line x1="12.5" y1="21.6" x2="20" y2="21.6" stroke="#c7d0d5" stroke-width="2.2"/></svg>
<div class="t" style="left:486.40px;top:72.39px;font-size:17.5px;color:#c7d0d5;font-weight:400;">View</div>
<svg class="r" style="left:566.00px;top:64.50px;" width="30" height="30" viewBox="0 0 30 30" fill="none" stroke="#3e5465" stroke-width="2" stroke-linecap="round" stroke-linejoin="round"><path d="M5 26 L5.5 20.5 L20 6 L24.5 10.5 L10 25 Z" stroke="#c7d0d5" stroke-width="2.4"/><path d="M21 5 L22.5 3.5 A2 2 0 0 1 25.5 3.5 L26.5 4.5 A2 2 0 0 1 26.5 7.5 L25 9 Z" fill="#c7d0d5" stroke="none"/></svg>
<div class="t" style="left:602.00px;top:72.39px;font-size:17.5px;color:#c7d0d5;font-weight:400;">Edit</div>
<svg class="r" style="left:675.00px;top:68.00px;" width="26" height="24" viewBox="0 0 26 24" fill="none" stroke="#3e5465" stroke-width="2" stroke-linecap="round" stroke-linejoin="round"><polyline points="3,13 9,19 22,5" stroke="#c7d0d5" stroke-width="2.6"/></svg>
<div class="t" style="left:708.00px;top:72.39px;font-size:17.5px;color:#c7d0d5;font-weight:400;">Approve</div>
<svg class="r" style="left:781.00px;top:75.00px;" width="14" height="10" viewBox="0 0 14 10" fill="none" stroke="#3e5465" stroke-width="2" stroke-linecap="round" stroke-linejoin="round"><polygon points="2,2 12,2 7,7" fill="#dde2e5" stroke="#dde2e5" stroke-width="1"/></svg>
<svg class="r" style="left:836.00px;top:68.00px;" width="28" height="24" viewBox="0 0 28 24" fill="none" stroke="#3e5465" stroke-width="2" stroke-linecap="round" stroke-linejoin="round"><path d="M9 5 L3 11 L9 17" stroke="#c7d0d5" stroke-width="2.4"/><path d="M3 11 L17 11 C21 11 24 14 24 18 L24 21" stroke="#c7d0d5" stroke-width="2.4"/></svg>
<div class="t" style="left:870.20px;top:72.39px;font-size:17.5px;color:#c7d0d5;font-weight:400;">Report ready</div>
<svg class="r" style="left:1012.00px;top:68.00px;" width="28" height="24" viewBox="0 0 28 24" fill="none" stroke="#3e5465" stroke-width="2" stroke-linecap="round" stroke-linejoin="round"><path d="M19 5 L25 11 L19 17" stroke="#c7d0d5" stroke-width="2.4"/><path d="M25 11 L11 11 C7 11 4 14 4 18 L4 21" stroke="#c7d0d5" stroke-width="2.4"/></svg>
<div class="t" style="left:1047.00px;top:72.39px;font-size:17.5px;color:#c7d0d5;font-weight:400;">Assign</div>
<svg class="r" style="left:1143.00px;top:66.00px;" width="30" height="28" viewBox="0 0 30 28" fill="none" stroke="#3e5465" stroke-width="2" stroke-linecap="round" stroke-linejoin="round"><path d="M8 10 L8 3.5 L21 3.5 L21 10" stroke-width="2.4"/><path d="M8 21 L3 21 L3 12 A2 2 0 0 1 5 10 L24 10 A2 2 0 0 1 26 12 L26 21 L21 21" stroke-width="2.4"/><rect x="8" y="17" width="13" height="8.5" stroke-width="2.4"/><line x1="22" y1="13.5" x2="22.5" y2="13.5" stroke-width="2"/></svg>
<div class="t" style="left:1178.00px;top:72.39px;font-size:17.5px;color:#3e5465;font-weight:400;">Print</div>
<svg class="r" style="left:1258.00px;top:66.00px;" width="28" height="28" viewBox="0 0 28 28" fill="none" stroke="#3e5465" stroke-width="2" stroke-linecap="round" stroke-linejoin="round"><path d="M16 3 L4 3 A1.5 1.5 0 0 0 2.5 4.5 L2.5 23.5 A1.5 1.5 0 0 0 4 25 L22.5 25 A1.5 1.5 0 0 0 24 23.5 L24 19" stroke-width="2.6"/><path d="M24 9 L24 4.5 A1.5 1.5 0 0 0 22.5 3 L20 3" stroke-width="2.6"/><line x1="9" y1="14" x2="22" y2="14" stroke-width="2.6"/><polyline points="17.5,9 22.5,14 17.5,19" stroke-width="2.6"/></svg>
<div class="t" style="left:1293.00px;top:72.39px;font-size:17.5px;color:#3e5465;font-weight:400;">Export</div>
<svg class="r" style="left:1390.00px;top:66.00px;" width="20" height="28" viewBox="0 0 20 28" fill="none" stroke="#3e5465" stroke-width="2" stroke-linecap="round" stroke-linejoin="round"><circle cx="10" cy="5" r="2.4" fill="#3e5465" stroke="none"/><circle cx="10" cy="14" r="2.4" fill="#3e5465" stroke="none"/><circle cx="10" cy="23" r="2.4" fill="#3e5465" stroke="none"/></svg>
<div class="t" style="left:1420.00px;top:72.39px;font-size:17.5px;color:#3e5465;font-weight:400;">More</div>
<svg class="r" style="left:1469.00px;top:75.00px;" width="14" height="10" viewBox="0 0 14 10" fill="none" stroke="#3e5465" stroke-width="2" stroke-linecap="round" stroke-linejoin="round"><polygon points="2,2 12,2 7,7" fill="#a9b3ba" stroke="#a9b3ba" stroke-width="1"/></svg>
<div class="t" style="left:440.70px;top:129.05px;font-size:27.7px;color:#1e262d;font-weight:400;">All registrations</div>
<svg class="r" style="left:2356.00px;top:128.00px;" width="30" height="30" viewBox="0 0 30 30" fill="none" stroke="#3e5465" stroke-width="2" stroke-linecap="round" stroke-linejoin="round"><path d="M24 15 A9.5 9.5 0 1 1 21 8" stroke-width="2.6"/><polyline points="22,3 22,9 16,9" stroke-width="2.6" stroke-linecap="butt" stroke-linejoin="miter"/></svg>
<svg class="r" style="left:2401.00px;top:128.00px;" width="20" height="30" viewBox="0 0 20 30" fill="none" stroke="#3e5465" stroke-width="2" stroke-linecap="round" stroke-linejoin="round"><circle cx="10" cy="6" r="2.4" fill="#3e5465" stroke="none"/><circle cx="10" cy="15" r="2.4" fill="#3e5465" stroke="none"/><circle cx="10" cy="24" r="2.4" fill="#3e5465" stroke="none"/></svg>
<div class="r" style="left:2451.50px;top:120.00px;width:1.50px;height:45.00px;background:#dfe3e6;"></div>
<div class="r" style="left:2473.00px;top:123.00px;width:40.00px;height:40.00px;background:#eceef1;border-radius:6px;"></div>
<svg class="r" style="left:2480.00px;top:132.00px;" width="26" height="22" viewBox="0 0 26 22" fill="none" stroke="#3e5465" stroke-width="2" stroke-linecap="round" stroke-linejoin="round"><rect x="3" y="3" width="20" height="16" rx="1.5" stroke-width="2.6"/><line x1="3" y1="8.3" x2="23" y2="8.3" stroke-width="2.4"/><line x1="3" y1="13.6" x2="23" y2="13.6" stroke-width="2.4"/><line x1="7.5" y1="3" x2="7.5" y2="19" stroke-width="2.4"/></svg>
<svg class="r" style="left:2520.00px;top:129.00px;" width="30" height="30" viewBox="0 0 30 30" fill="none" stroke="#3e5465" stroke-width="2" stroke-linecap="round" stroke-linejoin="round"><circle cx="15" cy="15" r="11.5" stroke-width="2.6"/><polyline points="15,3.5 15,15 23.5,22.5" stroke-width="2.4"/><line x1="15" y1="15" x2="26.5" y2="15" stroke-width="2.4"/></svg>
<div class="r" style="left:435px;top:186px;width:262.5px;height:37.5px;border:1.5px solid #6f808c;border-radius:5px;"></div>
<svg class="r" style="left:445.00px;top:192.00px;" width="28" height="28" viewBox="0 0 28 28" fill="none" stroke="#3e5465" stroke-width="2" stroke-linecap="round" stroke-linejoin="round"><circle cx="11" cy="11" r="7.5" stroke-width="2.6"/><line x1="16.5" y1="16.5" x2="23" y2="23" stroke-width="2.8" stroke-linecap="butt"/></svg>
<div class="t" style="left:476.30px;top:198.41px;font-size:17px;color:#9aa7b0;font-weight:400;">Search</div>
<svg class="r" style="left:724.00px;top:194.00px;" width="24" height="24" viewBox="0 0 24 24" fill="none" stroke="#3e5465" stroke-width="2" stroke-linecap="round" stroke-linejoin="round"><line x1="12" y1="3" x2="12" y2="21" stroke-width="2.4"/><line x1="3" y1="12" x2="21" y2="12" stroke-width="2.4"/></svg>
<div class="t" style="left:756.80px;top:198.07px;font-size:17.4px;color:#3e5465;font-weight:400;-webkit-text-stroke:0.55px #3e5465;">Add filter</div>
<div class="t" style="left:435.40px;top:252.95px;font-size:17.9px;color:#435767;font-weight:400;-webkit-text-stroke:0.55px #435767;">Inspection point number</div>
<div class="t" style="left:730.00px;top:252.95px;font-size:17.9px;color:#435767;font-weight:400;-webkit-text-stroke:0.55px #435767;">Inspection point subject</div>
<div class="t" style="left:1118.00px;top:252.95px;font-size:17.9px;color:#435767;font-weight:400;-webkit-text-stroke:0.55px #435767;">Planned</div>
<div class="t" style="left:1257.00px;top:252.95px;font-size:17.9px;color:#435767;font-weight:400;-webkit-text-stroke:0.55px #435767;">Inspection plan</div>
<div class="t" style="left:1499.00px;top:252.95px;font-size:17.9px;color:#435767;font-weight:400;-webkit-text-stroke:0.55px #435767;">Memo no.</div>
<div class="t" style="left:1655.00px;top:252.95px;font-size:17.9px;color:#435767;font-weight:400;-webkit-text-stroke:0.55px #435767;">Type</div>
<div class="t" style="left:1879.00px;top:252.95px;font-size:17.9px;color:#435767;font-weight:400;-webkit-text-stroke:0.55px #435767;">Modified by</div>
<div class="t" style="left:2297.00px;top:252.95px;font-size:17.9px;color:#435767;font-weight:400;-webkit-text-stroke:0.55px #435767;">Date modified</div>
<div class="t" style="left:2460.00px;top:252.95px;font-size:17.9px;color:#435767;font-weight:400;-webkit-text-stroke:0.55px #435767;">Created</div>
<svg class="r" style="left:2268.00px;top:249.00px;" width="20" height="22" viewBox="0 0 20 22" fill="none" stroke="#3e5465" stroke-width="2" stroke-linecap="round" stroke-linejoin="round"><line x1="10" y1="3" x2="10" y2="19" stroke-width="2"/><polyline points="4,13 10,19 16,13" stroke-width="2"/></svg>
<div class="r" style="left:430.00px;top:278.00px;width:2130.00px;height:6.00px;background:linear-gradient(#fafafa,#f2f3f4 40%,#eef0f1 80%,#f4f5f5);"></div>
<div class="r" style="left:2525px;top:240px;width:35px;height:39px;background:#fff;box-shadow:-3px 0 4px rgba(0,0,0,0.10);"></div>
<svg class="r" style="left:2530.00px;top:246.00px;" width="26" height="26" viewBox="0 0 26 26" fill="none" stroke="#3e5465" stroke-width="2" stroke-linecap="round" stroke-linejoin="round"><line x1="13.5" y1="4" x2="13.5" y2="22.5" stroke-width="2.2" stroke-linecap="butt"/><line x1="4.5" y1="13.2" x2="22.5" y2="13.2" stroke-width="2.2" stroke-linecap="butt"/></svg>
<div class="r" style="left:430px;top:283px;width:2115px;height:1157px;overflow:hidden;">
<div class="r" style="left:0;top:0.00px;width:2115px;height:41.00px;background:#d3ebae;"></div>
<div class="r" style="left:0;top:40.00px;width:2115px;height:1px;background:#eef0f1;"></div>
<div class="r" style="left:5px;top:12.50px;width:15px;height:15px;border-radius:50%;background:#f0782a;"></div>
<div class="t" style="left:30.00px;top:11.79px;font-size:17.5px;color:#1f272e;">2.6</div>
<div class="t" style="left:300.00px;top:11.79px;font-size:17.5px;color:#1f272e;">Mounting of plaster</div>
<div class="t" style="left:827.00px;top:11.79px;font-size:17.5px;color:#1f272e;">Inspection_Internal fitout</div>
<div class="t" style="left:1069.00px;top:11.79px;font-size:17.5px;color:#1f272e;">I33</div>
<div class="t" style="left:1225.00px;top:11.79px;font-size:17.5px;color:#1f272e;">Inspection</div>
<div class="t" style="left:1449.00px;top:11.79px;font-size:17.5px;color:#1f272e;">Magnus Dahl Larsen, Dalux ApS</div>
<div class="t" style="left:1837.00px;top:11.79px;font-size:17.5px;color:#1f272e;">15 Feb 2023, 10:11</div>
<div class="t" style="left:2030.00px;top:11.79px;font-size:17.5px;color:#1f272e;">Magnus Dahl Larsen</div>
<div class="r" style="left:0;top:41.00px;width:2115px;height:40.00px;background:#d3ebae;"></div>
<div class="r" style="left:0;top:80.00px;width:2115px;height:1px;background:#eef0f1;"></div>
<div class="r" style="left:5px;top:53.00px;width:15px;height:15px;border-radius:50%;background:#f0782a;"></div>
<div class="t" style="left:30.00px;top:53.19px;font-size:17.5px;color:#1f272e;">2.6</div>
<div class="t" style="left:300.00px;top:53.19px;font-size:17.5px;color:#1f272e;">Mounting of plaster</div>
<div class="t" style="left:827.00px;top:53.19px;font-size:17.5px;color:#1f272e;">Inspection_Internal fitout</div>
<div class="t" style="left:1069.00px;top:53.19px;font-size:17.5px;color:#1f272e;">I32</div>
<div class="t" style="left:1225.00px;top:53.19px;font-size:17.5px;color:#1f272e;">Inspection</div>
<div class="t" style="left:1449.00px;top:53.19px;font-size:17.5px;color:#1f272e;">Magnus Dahl Larsen, Dalux ApS</div>
<div class="t" style="left:1837.00px;top:53.19px;font-size:17.5px;color:#1f272e;">15 Feb 2023, 10:10</div>
<div class="t" style="left:2030.00px;top:53.19px;font-size:17.5px;color:#1f272e;">Magnus Dahl Larsen</div>
<div class="r" style="left:0;top:81.00px;width:2115px;height:40.00px;background:#d3ebae;"></div>
<div class="r" style="left:0;top:120.00px;width:2115px;height:1px;background:#eef0f1;"></div>
<div class="r" style="left:5px;top:93.00px;width:15px;height:15px;border-radius:50%;background:#f0782a;"></div>
<div class="t" style="left:30.00px;top:93.19px;font-size:17.5px;color:#1f272e;">1.2</div>
<div class="t" style="left:300.00px;top:93.19px;font-size:17.5px;color:#1f272e;">Formwork Certificate</div>
<div class="t" style="left:827.00px;top:93.19px;font-size:17.5px;color:#1f272e;">Inspection_Concrete pour</div>
<div class="t" style="left:1069.00px;top:93.19px;font-size:17.5px;color:#1f272e;">I30</div>
<div class="t" style="left:1225.00px;top:93.19px;font-size:17.5px;color:#1f272e;">Inspection</div>
<div class="t" style="left:1449.00px;top:93.19px;font-size:17.5px;color:#1f272e;">Magnus Dahl Larsen, Dalux ApS</div>
<div class="t" style="left:1837.00px;top:93.19px;font-size:17.5px;color:#1f272e;">25 Jan 2023, 15:12</div>
<div class="t" style="left:2030.00px;top:93.19px;font-size:17.5px;color:#1f272e;">Magnus Dahl Larsen</div>
<div class="r" style="left:0;top:121.00px;width:2115px;height:39.00px;background:#d3ebae;"></div>
<div class="r" style="left:0;top:159.00px;width:2115px;height:1px;background:#e8ece6;"></div>
<div class="r" style="left:5px;top:132.50px;width:15px;height:15px;border-radius:50%;background:#f0782a;"></div>
<div class="t" style="left:30.00px;top:132.69px;font-size:17.5px;color:#1f272e;">1.2</div>
<div class="t" style="left:300.00px;top:132.69px;font-size:17.5px;color:#1f272e;">Formwork Certificate</div>
<div class="t" style="left:827.00px;top:132.69px;font-size:17.5px;color:#1f272e;">Inspection_Concrete pour</div>
<div class="t" style="left:1069.00px;top:132.69px;font-size:17.5px;color:#1f272e;">I29</div>
<div class="t" style="left:1225.00px;top:132.69px;font-size:17.5px;color:#1f272e;">Inspection</div>
<div class="t" style="left:1449.00px;top:132.69px;font-size:17.5px;color:#1f272e;">Magnus Dahl Larsen, Dalux ApS</div>
<div class="t" style="left:1837.00px;top:132.69px;font-size:17.5px;color:#1f272e;">25 Jan 2023, 15:12</div>
<div class="t" style="left:2030.00px;top:132.69px;font-size:17.5px;color:#1f272e;">Magnus Dahl Larsen</div>
<div class="r" style="left:0;top:199.00px;width:2115px;height:1px;background:#efefef;"></div>
<div class="r" style="left:5px;top:172.00px;width:15px;height:15px;border-radius:50%;background:#239a55;"></div>
<div class="t" style="left:30.00px;top:172.19px;font-size:17.5px;color:#1f272e;">1.1</div>
<div class="t" style="left:300.00px;top:172.19px;font-size:17.5px;color:#1f272e;">All materials delivered</div>
<div class="t" style="left:827.00px;top:172.19px;font-size:17.5px;color:#1f272e;">Inspection_Internal fitout</div>
<div class="t" style="left:1069.00px;top:172.19px;font-size:17.5px;color:#1f272e;">I-IF_5</div>
<div class="t" style="left:1225.00px;top:172.19px;font-size:17.5px;color:#1f272e;">Inspection_Internal fitout</div>
<div class="t" style="left:1449.00px;top:172.19px;font-size:17.5px;color:#1f272e;">Stefan Lorenzen, Dalux ApS</div>
<div class="t" style="left:1837.00px;top:172.19px;font-size:17.5px;color:#1f272e;">2 Sep 2022, 11:13</div>
<div class="t" style="left:2030.00px;top:172.19px;font-size:17.5px;color:#1f272e;">Stefan Lorenzen</div>
<div class="r" style="left:0;top:240.00px;width:2115px;height:1px;background:#efefef;"></div>
<div class="r" style="left:5px;top:212.50px;width:15px;height:15px;border-radius:50%;background:#239a55;"></div>
<div class="t" style="left:30.00px;top:211.79px;font-size:17.5px;color:#1f272e;">1.4</div>
<div class="t" style="left:300.00px;top:211.79px;font-size:17.5px;color:#1f272e;">Inserts &amp; penetrations complete</div>
<div class="t" style="left:827.00px;top:211.79px;font-size:17.5px;color:#1f272e;">Inspection_Concrete pour</div>
<div class="t" style="left:1069.00px;top:211.79px;font-size:17.5px;color:#1f272e;">I28</div>
<div class="t" style="left:1225.00px;top:211.79px;font-size:17.5px;color:#1f272e;">Inspection</div>
<div class="t" style="left:1449.00px;top:211.79px;font-size:17.5px;color:#1f272e;">Magnus Dahl Larsen, Dalux ApS</div>
<div class="t" style="left:1837.00px;top:211.79px;font-size:17.5px;color:#1f272e;">19 Aug 2022, 13:32</div>
<div class="t" style="left:2030.00px;top:211.79px;font-size:17.5px;color:#1f272e;">Magnus Dahl Larsen</div>
<svg class="r" style="left:690px;top:210.00px" width="24" height="20" viewBox="0 0 24 20" fill="none" stroke="#3e5465" stroke-width="2.6" stroke-linecap="round" stroke-linejoin="round"><polyline points="3,10 9,16 21,4"/></svg>
<div class="r" style="left:0;top:280.41px;width:2115px;height:1px;background:#efefef;"></div>
<div class="r" style="left:5px;top:253.21px;width:15px;height:15px;border-radius:50%;background:#239a55;"></div>
<div class="t" style="left:30.00px;top:253.39px;font-size:17.5px;color:#1f272e;">2.2</div>
<div class="t" style="left:300.00px;top:253.39px;font-size:17.5px;color:#1f272e;">Door openings</div>
<div class="t" style="left:827.00px;top:253.39px;font-size:17.5px;color:#1f272e;">Inspection_Internal fitout</div>
<div class="t" style="left:1069.00px;top:253.39px;font-size:17.5px;color:#1f272e;">I-IF_4</div>
<div class="t" style="left:1225.00px;top:253.39px;font-size:17.5px;color:#1f272e;">Inspection_Internal fitout</div>
<div class="t" style="left:1449.00px;top:253.39px;font-size:17.5px;color:#1f272e;">Magnus Dahl Larsen, Dalux ApS</div>
<div class="t" style="left:1837.00px;top:253.39px;font-size:17.5px;color:#1f272e;">2 Nov 2021, 15:24</div>
<div class="t" style="left:2030.00px;top:253.39px;font-size:17.5px;color:#1f272e;">Magnus Dahl Larsen</div>
<div class="r" style="left:0;top:320.83px;width:2115px;height:1px;background:#efefef;"></div>
<div class="r" style="left:5px;top:293.62px;width:15px;height:15px;border-radius:50%;background:#239a55;"></div>
<div class="t" style="left:30.00px;top:293.81px;font-size:17.5px;color:#1f272e;">2.1</div>
<div class="t" style="left:300.00px;top:293.81px;font-size:17.5px;color:#1f272e;">Walls</div>
<div class="t" style="left:827.00px;top:293.81px;font-size:17.5px;color:#1f272e;">Inspection_Internal fitout</div>
<div class="t" style="left:1069.00px;top:293.81px;font-size:17.5px;color:#1f272e;">I-IF_3</div>
<div class="t" style="left:1225.00px;top:293.81px;font-size:17.5px;color:#1f272e;">Inspection_Internal fitout</div>
<div class="t" style="left:1449.00px;top:293.81px;font-size:17.5px;color:#1f272e;">Magnus Dahl Larsen, Dalux ApS</div>
<div class="t" style="left:1837.00px;top:293.81px;font-size:17.5px;color:#1f272e;">2 Nov 2021, 15:24</div>
<div class="t" style="left:2030.00px;top:293.81px;font-size:17.5px;color:#1f272e;">Magnus Dahl Larsen</div>
<div class="r" style="left:0;top:361.24px;width:2115px;height:1px;background:#efefef;"></div>
<div class="r" style="left:5px;top:334.03px;width:15px;height:15px;border-radius:50%;background:#239a55;"></div>
<div class="t" style="left:30.00px;top:334.22px;font-size:17.5px;color:#1f272e;">2.3</div>
<div class="t" style="left:300.00px;top:334.22px;font-size:17.5px;color:#1f272e;">Ceilings</div>
<div class="t" style="left:827.00px;top:334.22px;font-size:17.5px;color:#1f272e;">Inspection_Internal fitout</div>
<div class="t" style="left:1069.00px;top:334.22px;font-size:17.5px;color:#1f272e;">I-IF_2</div>
<div class="t" style="left:1225.00px;top:334.22px;font-size:17.5px;color:#1f272e;">Inspection_Internal fitout</div>
<div class="t" style="left:1449.00px;top:334.22px;font-size:17.5px;color:#1f272e;">Magnus Dahl Larsen, Dalux ApS</div>
<div class="t" style="left:1837.00px;top:334.22px;font-size:17.5px;color:#1f272e;">2 Nov 2021, 15:23</div>
<div class="t" style="left:2030.00px;top:334.22px;font-size:17.5px;color:#1f272e;">Magnus Dahl Larsen</div>
<div class="r" style="left:0;top:401.65px;width:2115px;height:1px;background:#efefef;"></div>
<div class="r" style="left:5px;top:374.44px;width:15px;height:15px;border-radius:50%;background:#239a55;"></div>
<div class="t" style="left:30.00px;top:374.63px;font-size:17.5px;color:#1f272e;">1.3</div>
<div class="t" style="left:300.00px;top:374.63px;font-size:17.5px;color:#1f272e;">Reinforcement</div>
<div class="t" style="left:827.00px;top:374.63px;font-size:17.5px;color:#1f272e;">Inspection_Concrete pour</div>
<div class="t" style="left:1069.00px;top:374.63px;font-size:17.5px;color:#1f272e;">I-CP_8</div>
<div class="t" style="left:1225.00px;top:374.63px;font-size:17.5px;color:#1f272e;">Inspection_Concrete pour</div>
<div class="t" style="left:1449.00px;top:374.63px;font-size:17.5px;color:#1f272e;">Magnus Dahl Larsen, Dalux ApS</div>
<div class="t" style="left:1837.00px;top:374.63px;font-size:17.5px;color:#1f272e;">29 Oct 2021, 10:32</div>
<div class="t" style="left:2030.00px;top:374.63px;font-size:17.5px;color:#1f272e;">Magnus Dahl Larsen</div>
<svg class="r" style="left:690px;top:371.94px" width="24" height="20" viewBox="0 0 24 20" fill="none" stroke="#3e5465" stroke-width="2.6" stroke-linecap="round" stroke-linejoin="round"><polyline points="3,10 9,16 21,4"/></svg>
<div class="r" style="left:0;top:442.06px;width:2115px;height:1px;background:#efefef;"></div>
<div class="r" style="left:5px;top:414.86px;width:15px;height:15px;border-radius:50%;background:#239a55;"></div>
<div class="t" style="left:30.00px;top:415.04px;font-size:17.5px;color:#1f272e;">1.1</div>
<div class="t" style="left:300.00px;top:415.04px;font-size:17.5px;color:#1f272e;">Formwork setout</div>
<div class="t" style="left:827.00px;top:415.04px;font-size:17.5px;color:#1f272e;">Inspection_Concrete pour</div>
<div class="t" style="left:1069.00px;top:415.04px;font-size:17.5px;color:#1f272e;">I-CP_7</div>
<div class="t" style="left:1225.00px;top:415.04px;font-size:17.5px;color:#1f272e;">Inspection_Concrete pour</div>
<div class="t" style="left:1449.00px;top:415.04px;font-size:17.5px;color:#1f272e;">Magnus Dahl Larsen, Dalux ApS</div>
<div class="t" style="left:1837.00px;top:415.04px;font-size:17.5px;color:#1f272e;">1 Sep 2021, 09:33</div>
<div class="t" style="left:2030.00px;top:415.04px;font-size:17.5px;color:#1f272e;">Magnus Dahl Larsen</div>
<svg class="r" style="left:690px;top:412.36px" width="24" height="20" viewBox="0 0 24 20" fill="none" stroke="#3e5465" stroke-width="2.6" stroke-linecap="round" stroke-linejoin="round"><polyline points="3,10 9,16 21,4"/></svg>
<div class="r" style="left:0;top:482.47px;width:2115px;height:1px;background:#efefef;"></div>
<div class="r" style="left:5px;top:455.27px;width:15px;height:15px;border-radius:50%;background:#239a55;"></div>
<div class="t" style="left:30.00px;top:455.45px;font-size:17.5px;color:#1f272e;">1.2</div>
<div class="t" style="left:300.00px;top:455.45px;font-size:17.5px;color:#1f272e;">Formwork Certificate</div>
<div class="t" style="left:827.00px;top:455.45px;font-size:17.5px;color:#1f272e;">Inspection_Concrete pour</div>
<div class="t" style="left:1069.00px;top:455.45px;font-size:17.5px;color:#1f272e;">I-CP_6</div>
<div class="t" style="left:1225.00px;top:455.45px;font-size:17.5px;color:#1f272e;">Inspection_Concrete pour</div>
<div class="t" style="left:1449.00px;top:455.45px;font-size:17.5px;color:#1f272e;">Magnus Dahl Larsen, Dalux ApS</div>
<div class="t" style="left:1837.00px;top:455.45px;font-size:17.5px;color:#1f272e;">1 Sep 2021, 09:33</div>
<div class="t" style="left:2030.00px;top:455.45px;font-size:17.5px;color:#1f272e;">Magnus Dahl Larsen</div>
<svg class="r" style="left:690px;top:452.77px" width="24" height="20" viewBox="0 0 24 20" fill="none" stroke="#3e5465" stroke-width="2.6" stroke-linecap="round" stroke-linejoin="round"><polyline points="3,10 9,16 21,4"/></svg>
<div class="r" style="left:0;top:522.89px;width:2115px;height:1px;background:#efefef;"></div>
<div class="r" style="left:5px;top:495.68px;width:15px;height:15px;border-radius:50%;background:#f0782a;"></div>
<div class="t" style="left:30.00px;top:495.87px;font-size:17.5px;color:#1f272e;">1.1</div>
<div class="t" style="left:300.00px;top:495.87px;font-size:17.5px;color:#1f272e;">All materials delivered</div>
<div class="t" style="left:827.00px;top:495.87px;font-size:17.5px;color:#1f272e;">Inspection_Internal fitout</div>
<div class="t" style="left:1069.00px;top:495.87px;font-size:17.5px;color:#1f272e;">I-IF_1</div>
<div class="t" style="left:1225.00px;top:495.87px;font-size:17.5px;color:#1f272e;">Inspection_Internal fitout</div>
<div class="t" style="left:1449.00px;top:495.87px;font-size:17.5px;color:#1f272e;">Mark Jay to</div>
<div class="t" style="left:1837.00px;top:495.87px;font-size:17.5px;color:#1f272e;">28 Apr 2021, 11:48</div>
<div class="t" style="left:2030.00px;top:495.87px;font-size:17.5px;color:#1f272e;">Mark Jay to</div>
<div class="r" style="left:0;top:563.30px;width:2115px;height:1px;background:#efefef;"></div>
<div class="r" style="left:5px;top:536.09px;width:15px;height:15px;border-radius:50%;background:#239a55;"></div>
<div class="t" style="left:30.00px;top:536.28px;font-size:17.5px;color:#1f272e;">1.4</div>
<div class="t" style="left:300.00px;top:536.28px;font-size:17.5px;color:#1f272e;">Inserts &amp; penetrations complete</div>
<div class="t" style="left:827.00px;top:536.28px;font-size:17.5px;color:#1f272e;">Inspection_Concrete pour</div>
<div class="t" style="left:1069.00px;top:536.28px;font-size:17.5px;color:#1f272e;">I-CP_5</div>
<div class="t" style="left:1225.00px;top:536.28px;font-size:17.5px;color:#1f272e;">Inspection_Concrete pour</div>
<div class="t" style="left:1449.00px;top:536.28px;font-size:17.5px;color:#1f272e;">Stefan Lorenzen, Dalux ApS</div>
<div class="t" style="left:1837.00px;top:536.28px;font-size:17.5px;color:#1f272e;">4 Mar 2021, 09:38</div>
<div class="t" style="left:2030.00px;top:536.28px;font-size:17.5px;color:#1f272e;">Stefan Lorenzen</div>
<svg class="r" style="left:690px;top:533.59px" width="24" height="20" viewBox="0 0 24 20" fill="none" stroke="#3e5465" stroke-width="2.6" stroke-linecap="round" stroke-linejoin="round"><polyline points="3,10 9,16 21,4"/></svg>
<div class="r" style="left:0;top:603.71px;width:2115px;height:1px;background:#efefef;"></div>
<div class="r" style="left:5px;top:576.51px;width:15px;height:15px;border-radius:50%;background:#f0782a;"></div>
<div class="t" style="left:30.00px;top:576.69px;font-size:17.5px;color:#1f272e;">2.2</div>
<div class="t" style="left:300.00px;top:576.69px;font-size:17.5px;color:#1f272e;">Starter bars</div>
<div class="t" style="left:827.00px;top:576.69px;font-size:17.5px;color:#1f272e;">Inspection_Concrete pour</div>
<div class="t" style="left:1069.00px;top:576.69px;font-size:17.5px;color:#1f272e;">I-CP_4</div>
<div class="t" style="left:1225.00px;top:576.69px;font-size:17.5px;color:#1f272e;">Inspection_Concrete pour</div>
<div class="t" style="left:1449.00px;top:576.69px;font-size:17.5px;color:#1f272e;">Mark Jaaaa</div>
<div class="t" style="left:1837.00px;top:576.69px;font-size:17.5px;color:#1f272e;">25 Feb 2021, 17:48</div>
<div class="t" style="left:2030.00px;top:576.69px;font-size:17.5px;color:#1f272e;">Mark Jaaaa</div>
<div class="r" style="left:0;top:644.12px;width:2115px;height:1px;background:#efefef;"></div>
<div class="r" style="left:5px;top:616.92px;width:15px;height:15px;border-radius:50%;background:#239a55;"></div>
<div class="t" style="left:30.00px;top:617.11px;font-size:17.5px;color:#1f272e;">1.1</div>
<div class="t" style="left:300.00px;top:617.11px;font-size:17.5px;color:#1f272e;">Formwork setout</div>
<div class="t" style="left:827.00px;top:617.11px;font-size:17.5px;color:#1f272e;">Inspection_Concrete pour</div>
<div class="t" style="left:1069.00px;top:617.11px;font-size:17.5px;color:#1f272e;">I-CP_3</div>
<div class="t" style="left:1225.00px;top:617.11px;font-size:17.5px;color:#1f272e;">Inspection_Concrete pour</div>
<div class="t" style="left:1449.00px;top:617.11px;font-size:17.5px;color:#1f272e;">Stefan Lorenzen, Dalux ApS</div>
<div class="t" style="left:1837.00px;top:617.11px;font-size:17.5px;color:#1f272e;">3 Dec 2020, 16:22</div>
<div class="t" style="left:2030.00px;top:617.11px;font-size:17.5px;color:#1f272e;">Stefan Lorenzen</div>
<svg class="r" style="left:690px;top:614.42px" width="24" height="20" viewBox="0 0 24 20" fill="none" stroke="#3e5465" stroke-width="2.6" stroke-linecap="round" stroke-linejoin="round"><polyline points="3,10 9,16 21,4"/></svg>
<div class="r" style="left:0;top:684.54px;width:2115px;height:1px;background:#efefef;"></div>
<div class="r" style="left:5px;top:657.33px;width:15px;height:15px;border-radius:50%;background:#239a55;"></div>
<div class="t" style="left:30.00px;top:657.52px;font-size:17.5px;color:#1f272e;">1.2</div>
<div class="t" style="left:300.00px;top:657.52px;font-size:17.5px;color:#1f272e;">Formwork Certificate</div>
<div class="t" style="left:827.00px;top:657.52px;font-size:17.5px;color:#1f272e;">Inspection_Concrete pour</div>
<div class="t" style="left:1069.00px;top:657.52px;font-size:17.5px;color:#1f272e;">I-CP_2</div>
<div class="t" style="left:1225.00px;top:657.52px;font-size:17.5px;color:#1f272e;">Inspection_Concrete pour</div>
<div class="t" style="left:1449.00px;top:657.52px;font-size:17.5px;color:#1f272e;">Stefan Lorenzen, Dalux ApS</div>
<div class="t" style="left:1837.00px;top:657.52px;font-size:17.5px;color:#1f272e;">17 Nov 2020, 15:38</div>
<div class="t" style="left:2030.00px;top:657.52px;font-size:17.5px;color:#1f272e;">Stefan Lorenzen</div>
<svg class="r" style="left:690px;top:654.83px" width="24" height="20" viewBox="0 0 24 20" fill="none" stroke="#3e5465" stroke-width="2.6" stroke-linecap="round" stroke-linejoin="round"><polyline points="3,10 9,16 21,4"/></svg>
<div class="r" style="left:0;top:724.95px;width:2115px;height:1px;background:#efefef;"></div>
<div class="r" style="left:5px;top:697.74px;width:15px;height:15px;border-radius:50%;background:#f0782a;"></div>
<div class="t" style="left:30.00px;top:697.93px;font-size:17.5px;color:#1f272e;">1.2</div>
<div class="t" style="left:300.00px;top:697.93px;font-size:17.5px;color:#1f272e;">Control of materials and products delivered a...</div>
<div class="t" style="left:827.00px;top:697.93px;font-size:17.5px;color:#1f272e;">Inspection_Internal fitout</div>
<div class="t" style="left:1069.00px;top:697.93px;font-size:17.5px;color:#1f272e;">SI4</div>
<div class="t" style="left:1225.00px;top:697.93px;font-size:17.5px;color:#1f272e;">Site inspection</div>
<div class="t" style="left:1449.00px;top:697.93px;font-size:17.5px;color:#1f272e;">Magnus Dahl Larsen, Dalux ApS</div>
<div class="t" style="left:1837.00px;top:697.93px;font-size:17.5px;color:#1f272e;">6 Oct 2020, 08:56</div>
<div class="t" style="left:2030.00px;top:697.93px;font-size:17.5px;color:#1f272e;">Magnus Dahl Larsen</div>
<svg class="r" style="left:690px;top:695.24px" width="24" height="20" viewBox="0 0 24 20" fill="none" stroke="#3e5465" stroke-width="2.6" stroke-linecap="round" stroke-linejoin="round"><polyline points="3,10 9,16 21,4"/></svg>
<div class="r" style="left:0;top:765.36px;width:2115px;height:1px;background:#efefef;"></div>
<div class="r" style="left:5px;top:738.16px;width:15px;height:15px;border-radius:50%;background:#239a55;"></div>
<div class="t" style="left:30.00px;top:738.34px;font-size:17.5px;color:#1f272e;">1.1</div>
<div class="t" style="left:300.00px;top:738.34px;font-size:17.5px;color:#1f272e;">All materials delivered</div>
<div class="t" style="left:827.00px;top:738.34px;font-size:17.5px;color:#1f272e;">Inspection_Internal fitout</div>
<div class="t" style="left:1069.00px;top:738.34px;font-size:17.5px;color:#1f272e;">I-IF_0</div>
<div class="t" style="left:1225.00px;top:738.34px;font-size:17.5px;color:#1f272e;">Inspection_Internal fitout</div>
<div class="t" style="left:1449.00px;top:738.34px;font-size:17.5px;color:#1f272e;">Stefan Lorenzen, Dalux ApS</div>
<div class="t" style="left:1837.00px;top:738.34px;font-size:17.5px;color:#1f272e;">15 Sep 2020, 12:28</div>
<div class="t" style="left:2030.00px;top:738.34px;font-size:17.5px;color:#1f272e;">Stefan Lorenzen</div>
<div class="r" style="left:0;top:805.77px;width:2115px;height:1px;background:#efefef;"></div>
<div class="r" style="left:5px;top:778.57px;width:15px;height:15px;border-radius:50%;background:#239a55;"></div>
<div class="t" style="left:30.00px;top:778.75px;font-size:17.5px;color:#1f272e;">1.1</div>
<div class="t" style="left:300.00px;top:778.75px;font-size:17.5px;color:#1f272e;">All materials delivered</div>
<div class="t" style="left:827.00px;top:778.75px;font-size:17.5px;color:#1f272e;">Inspection_Internal fitout</div>
<div class="t" style="left:1069.00px;top:778.75px;font-size:17.5px;color:#1f272e;">I-IF_0</div>
<div class="t" style="left:1225.00px;top:778.75px;font-size:17.5px;color:#1f272e;">Inspection_Internal fitout</div>
<div class="t" style="left:1449.00px;top:778.75px;font-size:17.5px;color:#1f272e;">Stefan Lorenzen, Dalux ApS</div>
<div class="t" style="left:1837.00px;top:778.75px;font-size:17.5px;color:#1f272e;">15 Sep 2020, 12:28</div>
<div class="t" style="left:2030.00px;top:778.75px;font-size:17.5px;color:#1f272e;">Stefan Lorenzen</div>
<div class="r" style="left:0;top:846.19px;width:2115px;height:1px;background:#efefef;"></div>
<div class="r" style="left:5px;top:818.98px;width:15px;height:15px;border-radius:50%;background:#239a55;"></div>
<div class="t" style="left:30.00px;top:819.17px;font-size:17.5px;color:#1f272e;">1.1</div>
<div class="t" style="left:300.00px;top:819.17px;font-size:17.5px;color:#1f272e;">All materials delivered</div>
<div class="t" style="left:827.00px;top:819.17px;font-size:17.5px;color:#1f272e;">Inspection_Internal fitout</div>
<div class="t" style="left:1069.00px;top:819.17px;font-size:17.5px;color:#1f272e;">I-IF_0</div>
<div class="t" style="left:1225.00px;top:819.17px;font-size:17.5px;color:#1f272e;">Inspection_Internal fitout</div>
<div class="t" style="left:1449.00px;top:819.17px;font-size:17.5px;color:#1f272e;">Stefan Lorenzen, Dalux ApS</div>
<div class="t" style="left:1837.00px;top:819.17px;font-size:17.5px;color:#1f272e;">15 Sep 2020, 12:28</div>
<div class="t" style="left:2030.00px;top:819.17px;font-size:17.5px;color:#1f272e;">Stefan Lorenzen</div>
<div class="r" style="left:0;top:886.60px;width:2115px;height:1px;background:#efefef;"></div>
<div class="r" style="left:5px;top:859.39px;width:15px;height:15px;border-radius:50%;background:#239a55;"></div>
<div class="t" style="left:30.00px;top:859.58px;font-size:17.5px;color:#1f272e;">1.3</div>
<div class="t" style="left:300.00px;top:859.58px;font-size:17.5px;color:#1f272e;">Reinforcement</div>
<div class="t" style="left:827.00px;top:859.58px;font-size:17.5px;color:#1f272e;">Inspection_Concrete pour</div>
<div class="t" style="left:1069.00px;top:859.58px;font-size:17.5px;color:#1f272e;">I-CP_1</div>
<div class="t" style="left:1225.00px;top:859.58px;font-size:17.5px;color:#1f272e;">Inspection_Concrete pour</div>
<div class="t" style="left:1449.00px;top:859.58px;font-size:17.5px;color:#1f272e;">Magnus Dahl Larsen, Dalux ApS</div>
<div class="t" style="left:1837.00px;top:859.58px;font-size:17.5px;color:#1f272e;">14 Sep 2020, 13:53</div>
<div class="t" style="left:2030.00px;top:859.58px;font-size:17.5px;color:#1f272e;">Magnus Dahl Larsen</div>
<svg class="r" style="left:690px;top:856.89px" width="24" height="20" viewBox="0 0 24 20" fill="none" stroke="#3e5465" stroke-width="2.6" stroke-linecap="round" stroke-linejoin="round"><polyline points="3,10 9,16 21,4"/></svg>
<div class="r" style="left:0;top:927.00px;width:2115px;height:1px;background:#efefef;"></div>
<div class="r" style="left:5px;top:899.80px;width:15px;height:15px;border-radius:50%;background:#239a55;"></div>
<div class="t" style="left:30.00px;top:899.99px;font-size:17.5px;color:#1f272e;">1</div>
<div class="t" style="left:300.00px;top:899.99px;font-size:17.5px;color:#1f272e;">Tilsyn 1</div>
<div class="t" style="left:827.00px;top:899.99px;font-size:17.5px;color:#1f272e;">Tilsyn</div>
<div class="t" style="left:1069.00px;top:899.99px;font-size:17.5px;color:#1f272e;">Tsda1</div>
<div class="t" style="left:1225.00px;top:899.99px;font-size:17.5px;color:#1f272e;">Tilsyn</div>
<div class="t" style="left:1449.00px;top:899.99px;font-size:17.5px;color:#1f272e;">Magnus Dahl Larsen, Dalux ApS</div>
<div class="t" style="left:1837.00px;top:899.99px;font-size:17.5px;color:#1f272e;">9 Sep 2020, 09:45</div>
<div class="t" style="left:2030.00px;top:899.99px;font-size:17.5px;color:#1f272e;">Magnus Dahl Larsen</div>
<svg class="r" style="left:690px;top:897.30px" width="24" height="20" viewBox="0 0 24 20" fill="none" stroke="#3e5465" stroke-width="2.6" stroke-linecap="round" stroke-linejoin="round"><polyline points="3,10 9,16 21,4"/></svg>
<div class="r" style="left:0;top:967.00px;width:2115px;height:1px;background:#efefef;"></div>
<div class="r" style="left:5px;top:940.00px;width:15px;height:15px;border-radius:50%;background:#f0782a;"></div>
<div class="t" style="left:30.00px;top:940.19px;font-size:17.5px;color:#1f272e;">2.2</div>
<div class="t" style="left:300.00px;top:940.19px;font-size:17.5px;color:#1f272e;">Starter bars</div>
<div class="t" style="left:827.00px;top:940.19px;font-size:17.5px;color:#1f272e;">Inspection_Concrete pour</div>
<div class="t" style="left:1069.00px;top:940.19px;font-size:17.5px;color:#1f272e;">I13</div>
<div class="t" style="left:1225.00px;top:940.19px;font-size:17.5px;color:#1f272e;">Inspection</div>
<div class="t" style="left:1449.00px;top:940.19px;font-size:17.5px;color:#1f272e;">Magnus Dahl Larsen, Dalux ApS</div>
<div class="t" style="left:1837.00px;top:940.19px;font-size:17.5px;color:#1f272e;">8 Sep 2020, 13:01</div>
<div class="t" style="left:2030.00px;top:940.19px;font-size:17.5px;color:#1f272e;">Magnus Dahl Larsen</div>
<div class="r" style="left:0;top:1008.00px;width:2115px;height:1px;background:#efefef;"></div>
<div class="r" style="left:5px;top:980.50px;width:15px;height:15px;border-radius:50%;background:#239a55;"></div>
<div class="t" style="left:30.00px;top:979.79px;font-size:17.5px;color:#1f272e;">1.1</div>
<div class="t" style="left:300.00px;top:979.79px;font-size:17.5px;color:#1f272e;">Formwork setout</div>
<div class="t" style="left:827.00px;top:979.79px;font-size:17.5px;color:#1f272e;">Inspection_Concrete pour</div>
<div class="t" style="left:1069.00px;top:979.79px;font-size:17.5px;color:#1f272e;">I-CP_10</div>
<div class="t" style="left:1225.00px;top:979.79px;font-size:17.5px;color:#1f272e;">Inspection_Concrete pour</div>
<div class="t" style="left:1449.00px;top:979.79px;font-size:17.5px;color:#1f272e;">Stefan Lorenzen, Dalux ApS</div>
<div class="t" style="left:1837.00px;top:979.79px;font-size:17.5px;color:#1f272e;">8 Sep 2020, 09:52</div>
<div class="t" style="left:2030.00px;top:979.79px;font-size:17.5px;color:#1f272e;">Stefan Lorenzen</div>
<svg class="r" style="left:690px;top:978.00px" width="24" height="20" viewBox="0 0 24 20" fill="none" stroke="#3e5465" stroke-width="2.6" stroke-linecap="round" stroke-linejoin="round"><polyline points="3,10 9,16 21,4"/></svg>
<div class="r" style="left:0;top:1049.00px;width:2115px;height:1px;background:#efefef;"></div>
<div class="r" style="left:5px;top:1021.50px;width:15px;height:15px;border-radius:50%;background:#239a55;"></div>
<div class="t" style="left:30.00px;top:1020.79px;font-size:17.5px;color:#1f272e;">1.2</div>
<div class="t" style="left:300.00px;top:1020.79px;font-size:17.5px;color:#1f272e;">Formwork Certificate</div>
<div class="t" style="left:827.00px;top:1020.79px;font-size:17.5px;color:#1f272e;">Inspection_Concrete pour</div>
<div class="t" style="left:1069.00px;top:1020.79px;font-size:17.5px;color:#1f272e;">I-CP_9</div>
<div class="t" style="left:1225.00px;top:1020.79px;font-size:17.5px;color:#1f272e;">Inspection_Concrete pour</div>
<div class="t" style="left:1449.00px;top:1020.79px;font-size:17.5px;color:#1f272e;">Magnus Dahl Larsen, Dalux ApS</div>
<div class="t" style="left:1837.00px;top:1020.79px;font-size:17.5px;color:#1f272e;">3 Sep 2020, 11:39</div>
<div class="t" style="left:2030.00px;top:1020.79px;font-size:17.5px;color:#1f272e;">Magnus Dahl Larsen</div>
<svg class="r" style="left:690px;top:1019.00px" width="24" height="20" viewBox="0 0 24 20" fill="none" stroke="#3e5465" stroke-width="2.6" stroke-linecap="round" stroke-linejoin="round"><polyline points="3,10 9,16 21,4"/></svg>
<div class="r" style="left:0;top:1090.00px;width:2115px;height:1px;background:#efefef;"></div>
<div class="r" style="left:5px;top:1062.50px;width:15px;height:15px;border-radius:50%;background:#f0782a;"></div>
<div class="t" style="left:30.00px;top:1061.79px;font-size:17.5px;color:#1f272e;">1.2</div>
<div class="t" style="left:300.00px;top:1061.79px;font-size:17.5px;color:#1f272e;">Control of materials and products delivered a...</div>
<div class="t" style="left:827.00px;top:1061.79px;font-size:17.5px;color:#1f272e;">Inspection_Internal fitout</div>
<div class="t" style="left:1069.00px;top:1061.79px;font-size:17.5px;color:#1f272e;">SI3</div>
<div class="t" style="left:1225.00px;top:1061.79px;font-size:17.5px;color:#1f272e;">Site inspection</div>
<div class="t" style="left:1449.00px;top:1061.79px;font-size:17.5px;color:#1f272e;">Stefan Lorenzen, Dalux ApS</div>
<div class="t" style="left:1837.00px;top:1061.79px;font-size:17.5px;color:#1f272e;">3 Sep 2020, 10:31</div>
<div class="t" style="left:2030.00px;top:1061.79px;font-size:17.5px;color:#1f272e;">Stefan Lorenzen</div>
<svg class="r" style="left:690px;top:1060.00px" width="24" height="20" viewBox="0 0 24 20" fill="none" stroke="#3e5465" stroke-width="2.6" stroke-linecap="round" stroke-linejoin="round"><polyline points="3,10 9,16 21,4"/></svg>
<div class="r" style="left:0;top:1131.00px;width:2115px;height:1px;background:#efefef;"></div>
<div class="r" style="left:5px;top:1103.50px;width:15px;height:15px;border-radius:50%;background:#f0782a;"></div>
<div class="t" style="left:30.00px;top:1102.79px;font-size:17.5px;color:#1f272e;">1.2</div>
<div class="t" style="left:300.00px;top:1102.79px;font-size:17.5px;color:#1f272e;">Control of materials and products delivered a...</div>
<div class="t" style="left:827.00px;top:1102.79px;font-size:17.5px;color:#1f272e;">Inspection_Internal fitout</div>
<div class="t" style="left:1069.00px;top:1102.79px;font-size:17.5px;color:#1f272e;">SI2</div>
<div class="t" style="left:1225.00px;top:1102.79px;font-size:17.5px;color:#1f272e;">Site inspection</div>
<div class="t" style="left:1449.00px;top:1102.79px;font-size:17.5px;color:#1f272e;">Stefan Lorenzen, Dalux ApS</div>
<div class="t" style="left:1837.00px;top:1102.79px;font-size:17.5px;color:#1f272e;">3 Sep 2020, 10:29</div>
<div class="t" style="left:2030.00px;top:1102.79px;font-size:17.5px;color:#1f272e;">Stefan Lorenzen</div>
<svg class="r" style="left:690px;top:1101.00px" width="24" height="20" viewBox="0 0 24 20" fill="none" stroke="#3e5465" stroke-width="2.6" stroke-linecap="round" stroke-linejoin="round"><polyline points="3,10 9,16 21,4"/></svg>
</div>
<div class="r" style="left:2547.00px;top:338.00px;width:10.00px;height:322.00px;background:#cdcdcd;border-radius:5px;"></div>
<div class="r" style="left:432.00px;top:1426.00px;width:585.00px;height:12.00px;background:#c8c8c8;border-radius:6px;"></div>
<div class="r" style="left:0.00px;top:0.00px;width:2560.00px;height:1440.00px;background:rgba(0,0,0,0.2);"></div>
<div class="r" style="left:2515.00px;top:64.00px;width:45.00px;height:43.00px;background:#d9d9d9;"></div>
<svg class="r" style="left:2520.00px;top:70.00px;" width="32" height="32" viewBox="0 0 32 32" fill="none" stroke="#3e5465" stroke-width="2" stroke-linecap="round" stroke-linejoin="round"><circle cx="16" cy="16" r="13.5" fill="#c3d4b3" stroke="none"/><polyline points="15,9 8,16 15,23" stroke="#e2eadb" stroke-width="2.6"/><line x1="8.5" y1="16" x2="24" y2="16" stroke="#e2eadb" stroke-width="2.6"/></svg>
<div class="r" style="left:366px;top:548px;width:1912.5px;height:624.5px;background:#fff;border-radius:9px;box-shadow:0 11px 15px -7px rgba(0,0,0,0.2),0 24px 38px 3px rgba(0,0,0,0.14),0 20px 90px 16px rgba(0,0,0,0.22);"></div>
<div class="t" style="left:382.30px;top:561.81px;font-size:24.2px;color:#1e262d;font-weight:700;">Print</div>
<svg class="r" style="left:2238.00px;top:558.00px;" width="30" height="30" viewBox="0 0 30 30" fill="none" stroke="#3e5465" stroke-width="2" stroke-linecap="round" stroke-linejoin="round"><line x1="8.5" y1="7.5" x2="23.5" y2="22.5" stroke-width="2.2" stroke-linecap="butt"/><line x1="23.5" y1="7.5" x2="8.5" y2="22.5" stroke-width="2.2" stroke-linecap="butt"/></svg>
<div class="r" style="left:390px;top:607px;width:19.5px;height:19.5px;border-radius:50%;border:1.5px solid #6b7d89;"></div>
<div class="t" style="left:424.00px;top:609.27px;font-size:17.4px;color:#28323a;font-weight:400;">Entire list</div>
<svg class="r" style="left:389px;top:649px" width="24" height="24" viewBox="0 0 24 24"><circle cx="12" cy="12" r="8.6" fill="#fff" stroke="#3a5062" stroke-width="5.8"/></svg>
<div class="t" style="left:424.00px;top:652.27px;font-size:17.4px;color:#28323a;font-weight:400;">Selected registrations (4)</div>
<div class="r" style="left:1885.00px;top:691.00px;width:275.00px;height:411.00px;background:#d4ebaf;border-radius:7px;"></div>
<div class="t" style="left:122.00px;width:1000px;text-align:center;top:707.27px;font-size:17.4px;color:#28323a;font-weight:400;">Single report</div>
<div class="t" style="left:402.00px;width:1000px;text-align:center;top:707.27px;font-size:17.4px;color:#28323a;font-weight:400;">Worker report</div>
<div class="t" style="left:682.00px;width:1000px;text-align:center;top:707.27px;font-size:17.4px;color:#28323a;font-weight:400;">Overview drawing</div>
<div class="t" style="left:962.00px;width:1000px;text-align:center;top:707.27px;font-size:17.4px;color:#28323a;font-weight:400;">Status report</div>
<div class="t" style="left:1242.00px;width:1000px;text-align:center;top:707.27px;font-size:17.4px;color:#28323a;font-weight:400;">Inspection plan</div>
<div class="t" style="left:1522.50px;width:1000px;text-align:center;top:707.27px;font-size:17.4px;color:#28323a;font-weight:400;">Custom report</div>
<div class="r" style="left:497px;top:740px;width:246px;height:345px;border:2px solid #b4bfc6;border-radius:6px;background:#fff;overflow:hidden;">
<div class="r" style="left:10.00px;top:10.00px;width:69.00px;height:12.00px;background:#eceff0;border-radius:1px;"></div>
<div class="r" style="left:154.00px;top:10.00px;width:81.00px;height:25.00px;background:#eceff0;border-radius:1px;"></div>
<div class="r" style="left:10.00px;top:55.00px;width:225.00px;height:15.00px;background:#d9dee2;"></div>
<div class="r" style="left:10.30px;top:80.50px;width:37.50px;height:4.80px;background:#d9dee2;border-radius:1px;"></div>
<div class="r" style="left:60.40px;top:80.50px;width:175.20px;height:4.80px;background:#d9dee2;border-radius:1px;"></div>
<div class="r" style="left:10.30px;top:92.80px;width:37.50px;height:4.80px;background:#d9dee2;border-radius:1px;"></div>
<div class="r" style="left:60.40px;top:92.80px;width:175.20px;height:4.80px;background:#d9dee2;border-radius:1px;"></div>
<div class="r" style="left:10.30px;top:105.40px;width:37.50px;height:4.80px;background:#d9dee2;border-radius:1px;"></div>
<div class="r" style="left:60.40px;top:105.40px;width:175.20px;height:4.80px;background:#d9dee2;border-radius:1px;"></div>
<div class="r" style="left:10.30px;top:118.00px;width:37.50px;height:4.80px;background:#d9dee2;border-radius:1px;"></div>
<div class="r" style="left:60.40px;top:118.00px;width:175.20px;height:4.80px;background:#d9dee2;border-radius:1px;"></div>
<div class="r" style="left:10.30px;top:133.10px;width:90.00px;height:65.00px;background:#eceff0;"></div>
<svg class="r" style="left:29.60px;top:144.70px" width="52" height="41" viewBox="0 0 52 41" fill="none"><rect x="2.3" y="2.3" width="47.4" height="36.4" rx="5.06" stroke="#b5bdc4" stroke-width="4.6"/><polygon points="10.40,31.37 16.64,21.73 23.40,27.06 32.24,17.22 42.64,31.37" fill="#b5bdc4"/></svg>
<div class="r" style="left:110.50px;top:133.10px;width:90.00px;height:65.00px;background:#eceff0;"></div>
<svg class="r" style="left:129.80px;top:144.70px" width="52" height="41" viewBox="0 0 52 41" fill="none"><rect x="2.3" y="2.3" width="47.4" height="36.4" rx="5.06" stroke="#b5bdc4" stroke-width="4.6"/><polygon points="10.40,31.37 16.64,21.73 23.40,27.06 32.24,17.22 42.64,31.37" fill="#b5bdc4"/></svg>
<div class="r" style="left:10.30px;top:260.30px;width:90.00px;height:65.00px;background:#eceff0;"></div>
<svg class="r" style="left:29.60px;top:271.90px" width="52" height="41" viewBox="0 0 52 41" fill="none"><rect x="2.3" y="2.3" width="47.4" height="36.4" rx="5.06" stroke="#b5bdc4" stroke-width="4.6"/><polygon points="10.40,31.37 16.64,21.73 23.40,27.06 32.24,17.22 42.64,31.37" fill="#b5bdc4"/></svg>
<div class="r" style="left:10.30px;top:207.60px;width:37.50px;height:4.80px;background:#d9dee2;border-radius:1px;"></div>
<div class="r" style="left:60.40px;top:207.60px;width:100.00px;height:4.80px;background:#d9dee2;border-radius:1px;"></div>
<div class="r" style="left:10.30px;top:220.50px;width:37.50px;height:4.80px;background:#d9dee2;border-radius:1px;"></div>
<div class="r" style="left:60.40px;top:220.50px;width:100.00px;height:4.80px;background:#d9dee2;border-radius:1px;"></div>
<div class="r" style="left:10.30px;top:232.80px;width:37.50px;height:4.80px;background:#d9dee2;border-radius:1px;"></div>
<div class="r" style="left:60.40px;top:232.80px;width:100.00px;height:4.80px;background:#d9dee2;border-radius:1px;"></div>
<div class="r" style="left:10.30px;top:245.40px;width:37.50px;height:4.80px;background:#d9dee2;border-radius:1px;"></div>
<div class="r" style="left:60.40px;top:245.40px;width:100.00px;height:4.80px;background:#d9dee2;border-radius:1px;"></div>
<div class="r" style="left:192.90px;top:207.60px;width:42.60px;height:10.40px;background:#8e9ba2;"></div>
<div class="r" style="left:192.90px;top:220.50px;width:42.60px;height:9.70px;background:#b5bdc4;"></div>
<div class="r" style="left:192.90px;top:232.80px;width:42.60px;height:10.00px;background:#d9dee2;"></div>
</div>
<div class="r" style="left:777px;top:740px;width:246px;height:345px;border:2px solid #b4bfc6;border-radius:6px;background:#fff;overflow:hidden;">
<div class="r" style="left:10.00px;top:10.00px;width:69.00px;height:12.00px;background:#eceff0;border-radius:1px;"></div>
<div class="r" style="left:154.00px;top:10.00px;width:81.00px;height:25.00px;background:#eceff0;border-radius:1px;"></div>
<div class="r" style="left:11.60px;top:56.80px;width:225.00px;height:15.00px;background:#b5bdc4;border-radius:2px;"></div>
<div class="r" style="left:10.80px;top:81.00px;width:50.60px;height:50.30px;background:#eceff0;box-shadow:inset 0 0 0 1px #e2e6e9;"></div>
<svg class="r" style="left:19.00px;top:92.80px" width="35" height="28" viewBox="0 0 35 28" fill="none"><rect x="1.6" y="1.6" width="31.8" height="24.8" rx="3.5200000000000005" stroke="#b5bdc4" stroke-width="3.2"/><polygon points="7.00,21.42 11.20,14.84 15.75,18.48 21.70,11.76 28.70,21.42" fill="#b5bdc4"/></svg>
<svg class="r" style="left:71.70px;top:82.00px" width="50" height="50" viewBox="0 0 50 50" fill="none"><rect x="0.75" y="0.75" width="48.1" height="48.5" stroke="#bfc7cd" stroke-width="1.5"/></svg>
<svg class="r" style="left:131.60px;top:82.00px" width="50" height="50" viewBox="0 0 50 50" fill="none"><rect x="0.75" y="0.75" width="48.3" height="48.5" stroke="#bfc7cd" stroke-width="1.5"/></svg>
<svg class="r" style="left:85.80px;top:91.80px" width="22" height="30" viewBox="0 0 22 30" fill="none"><path d="M11 28.5 L2.5 15 A9.8 9.8 0 1 1 19.5 15 Z" fill="#b5bdc4"/><circle cx="11" cy="10.3" r="3.4" fill="#fff"/></svg>
<svg class="r" style="left:144.00px;top:98.00px" width="40" height="20" viewBox="0 0 40 20" fill="none"><defs><linearGradient id="g0" x1="0" x2="1"><stop offset="0" stop-color="#b5bdc4" stop-opacity="0.9"/><stop offset="1" stop-color="#b5bdc4" stop-opacity="0"/></linearGradient></defs><polygon points="8,8.5 22,0 22,19 8,10.5" fill="url(#g0)"/><circle cx="8" cy="9.5" r="6.3" fill="#b5bdc4"/></svg>
<div class="r" style="left:191.70px;top:83.60px;width:37.30px;height:4.50px;background:#b5bdc4;border-radius:1px;"></div>
<div class="r" style="left:191.70px;top:95.90px;width:37.30px;height:4.50px;background:#b5bdc4;border-radius:1px;"></div>
<div class="r" style="left:191.70px;top:108.20px;width:37.30px;height:4.50px;background:#b5bdc4;border-radius:1px;"></div>
<div class="r" style="left:11.60px;top:143.00px;width:225.00px;height:2.00px;background:#e8ecee;"></div>
<div class="r" style="left:10.80px;top:154.90px;width:50.60px;height:50.30px;background:#eceff0;box-shadow:inset 0 0 0 1px #e2e6e9;"></div>
<svg class="r" style="left:19.00px;top:166.70px" width="35" height="28" viewBox="0 0 35 28" fill="none"><rect x="1.6" y="1.6" width="31.8" height="24.8" rx="3.5200000000000005" stroke="#b5bdc4" stroke-width="3.2"/><polygon points="7.00,21.42 11.20,14.84 15.75,18.48 21.70,11.76 28.70,21.42" fill="#b5bdc4"/></svg>
<svg class="r" style="left:71.70px;top:155.90px" width="50" height="50" viewBox="0 0 50 50" fill="none"><rect x="0.75" y="0.75" width="48.1" height="48.5" stroke="#bfc7cd" stroke-width="1.5"/></svg>
<svg class="r" style="left:131.60px;top:155.90px" width="50" height="50" viewBox="0 0 50 50" fill="none"><rect x="0.75" y="0.75" width="48.3" height="48.5" stroke="#bfc7cd" stroke-width="1.5"/></svg>
<svg class="r" style="left:85.80px;top:165.70px" width="22" height="30" viewBox="0 0 22 30" fill="none"><path d="M11 28.5 L2.5 15 A9.8 9.8 0 1 1 19.5 15 Z" fill="#b5bdc4"/><circle cx="11" cy="10.3" r="3.4" fill="#fff"/></svg>
<svg class="r" style="left:144.00px;top:171.90px" width="40" height="20" viewBox="0 0 40 20" fill="none"><defs><linearGradient id="g1" x1="0" x2="1"><stop offset="0" stop-color="#b5bdc4" stop-opacity="0.9"/><stop offset="1" stop-color="#b5bdc4" stop-opacity="0"/></linearGradient></defs><polygon points="8,8.5 22,0 22,19 8,10.5" fill="url(#g1)"/><circle cx="8" cy="9.5" r="6.3" fill="#b5bdc4"/></svg>
<div class="r" style="left:191.70px;top:157.50px;width:37.30px;height:4.50px;background:#b5bdc4;border-radius:1px;"></div>
<div class="r" style="left:191.70px;top:169.80px;width:37.30px;height:4.50px;background:#b5bdc4;border-radius:1px;"></div>
<div class="r" style="left:191.70px;top:182.10px;width:37.30px;height:4.50px;background:#b5bdc4;border-radius:1px;"></div>
<div class="r" style="left:11.60px;top:216.90px;width:225.00px;height:2.00px;background:#e8ecee;"></div>
<div class="r" style="left:10.80px;top:228.80px;width:50.60px;height:50.30px;background:#eceff0;box-shadow:inset 0 0 0 1px #e2e6e9;"></div>
<svg class="r" style="left:19.00px;top:240.60px" width="35" height="28" viewBox="0 0 35 28" fill="none"><rect x="1.6" y="1.6" width="31.8" height="24.8" rx="3.5200000000000005" stroke="#b5bdc4" stroke-width="3.2"/><polygon points="7.00,21.42 11.20,14.84 15.75,18.48 21.70,11.76 28.70,21.42" fill="#b5bdc4"/></svg>
<svg class="r" style="left:71.70px;top:229.80px" width="50" height="50" viewBox="0 0 50 50" fill="none"><rect x="0.75" y="0.75" width="48.1" height="48.5" stroke="#bfc7cd" stroke-width="1.5"/></svg>
<svg class="r" style="left:131.60px;top:229.80px" width="50" height="50" viewBox="0 0 50 50" fill="none"><rect x="0.75" y="0.75" width="48.3" height="48.5" stroke="#bfc7cd" stroke-width="1.5"/></svg>
<svg class="r" style="left:85.80px;top:239.60px" width="22" height="30" viewBox="0 0 22 30" fill="none"><path d="M11 28.5 L2.5 15 A9.8 9.8 0 1 1 19.5 15 Z" fill="#b5bdc4"/><circle cx="11" cy="10.3" r="3.4" fill="#fff"/></svg>
<svg class="r" style="left:144.00px;top:245.80px" width="40" height="20" viewBox="0 0 40 20" fill="none"><defs><linearGradient id="g2" x1="0" x2="1"><stop offset="0" stop-color="#b5bdc4" stop-opacity="0.9"/><stop offset="1" stop-color="#b5bdc4" stop-opacity="0"/></linearGradient></defs><polygon points="8,8.5 22,0 22,19 8,10.5" fill="url(#g2)"/><circle cx="8" cy="9.5" r="6.3" fill="#b5bdc4"/></svg>
<div class="r" style="left:191.70px;top:231.40px;width:37.30px;height:4.50px;background:#b5bdc4;border-radius:1px;"></div>
<div class="r" style="left:191.70px;top:243.70px;width:37.30px;height:4.50px;background:#b5bdc4;border-radius:1px;"></div>
<div class="r" style="left:191.70px;top:256.00px;width:37.30px;height:4.50px;background:#b5bdc4;border-radius:1px;"></div>
<div class="r" style="left:11.60px;top:290.80px;width:225.00px;height:2.00px;background:#e8ecee;"></div>
</div>
<div class="r" style="left:1057px;top:740px;width:246px;height:345px;border:2px solid #b4bfc6;border-radius:6px;background:#fff;overflow:hidden;">
<div class="r" style="left:10.00px;top:10.00px;width:69.00px;height:12.00px;background:#eceff0;border-radius:1px;"></div>
<div class="r" style="left:154.00px;top:10.00px;width:81.00px;height:25.00px;background:#eceff0;border-radius:1px;"></div>
<svg class="r" style="left:-2.00px;top:-2.00px" width="250" height="349" viewBox="0 0 250 349" fill="none"><rect x="42" y="61" width="165.4" height="252.5" stroke="#b5bdc4" stroke-width="9.8" fill="none"/>
<line x1="58.3" y1="58.7" x2="87.8" y2="58.7" stroke="#fff" stroke-width="1.4"/><line x1="58.3" y1="63.3" x2="87.8" y2="63.3" stroke="#fff" stroke-width="1.4"/>
<line x1="121.2" y1="58.7" x2="150.8" y2="58.7" stroke="#fff" stroke-width="1.4"/><line x1="121.2" y1="63.3" x2="150.8" y2="63.3" stroke="#fff" stroke-width="1.4"/>
<line x1="39.7" y1="84.5" x2="39.7" y2="114" stroke="#fff" stroke-width="1.4"/><line x1="44.3" y1="84.5" x2="44.3" y2="114" stroke="#fff" stroke-width="1.4"/><line x1="39.7" y1="185.8" x2="39.7" y2="215.3" stroke="#fff" stroke-width="1.4"/><line x1="44.3" y1="185.8" x2="44.3" y2="215.3" stroke="#fff" stroke-width="1.4"/><line x1="39.7" y1="259.7" x2="39.7" y2="289.3" stroke="#fff" stroke-width="1.4"/><line x1="44.3" y1="259.7" x2="44.3" y2="289.3" stroke="#fff" stroke-width="1.4"/><line x1="205.1" y1="241.8" x2="205.1" y2="271.3" stroke="#fff" stroke-width="1.4"/><line x1="209.7" y1="241.8" x2="209.7" y2="271.3" stroke="#fff" stroke-width="1.4"/><rect x="202" y="140.3" width="11" height="32.6" fill="#fff"/><path d="M212 140.5 A32 32 0 0 1 227 147.5 L211 172.5" stroke="#b5bdc4" stroke-width="1" fill="none"/><rect x="47" y="140.3" width="11" height="4.6" fill="#b5bdc4"/><rect x="89" y="140.3" width="33" height="4.6" fill="#b5bdc4"/><path d="M58 141 L80 124 A20 20 0 0 1 89 141" stroke="#b5bdc4" stroke-width="1" fill="none"/><rect x="117.3" y="140.3" width="4.7" height="106.6" fill="#b5bdc4"/><rect x="117.3" y="277.7" width="4.7" height="31" fill="#b5bdc4"/><path d="M117.5 277.5 C110 277 104 275 103 271 L117.5 247" stroke="#b5bdc4" stroke-width="1" fill="none"/><rect x="122" y="201.2" width="25" height="4.6" fill="#b5bdc4"/><rect x="177.5" y="201.2" width="25" height="4.6" fill="#b5bdc4"/><path d="M147 202 L169 185 A20 20 0 0 1 177.5 202" stroke="#b5bdc4" stroke-width="1" fill="none"/><rect x="47" y="230.2" width="70.3" height="4.4" fill="#b5bdc4"/><rect x="55" y="158.8" width="34.7" height="17.2" rx="8.6" fill="#8e9ba2"/><rect x="129.7" y="139.8" width="35" height="17.7" rx="8.8" fill="#8e9ba2"/><rect x="74.8" y="283.6" width="34.9" height="17.5" rx="8.7" fill="#8e9ba2"/></svg>
</div>
<div class="r" style="left:1337px;top:740px;width:246px;height:345px;border:2px solid #b4bfc6;border-radius:6px;background:#fff;overflow:hidden;">
<div class="r" style="left:-2.00px;top:-2.00px;width:250.00px;height:87.00px;background:#b5bdc4;"></div>
<div class="r" style="left:-2.00px;top:260.80px;width:250.00px;height:90.00px;background:#b5bdc4;"></div>
<div class="r" style="left:10.00px;top:98.00px;width:69.00px;height:12.30px;background:#eceff0;"></div>
<div class="r" style="left:154.00px;top:98.00px;width:81.40px;height:24.60px;background:#eceff0;"></div>
<div class="r" style="left:10.00px;top:133.10px;width:225.00px;height:14.70px;background:#d9dee2;"></div>
<div class="r" style="left:10.00px;top:153.00px;width:25.00px;height:4.60px;background:#d9dee2;border-radius:2px;"></div>
<div class="r" style="left:47.80px;top:153.00px;width:25.00px;height:4.60px;background:#d9dee2;border-radius:2px;"></div>
<div class="r" style="left:85.30px;top:153.00px;width:25.00px;height:4.60px;background:#d9dee2;border-radius:2px;"></div>
<div class="r" style="left:172.70px;top:153.00px;width:25.00px;height:4.60px;background:#d9dee2;border-radius:2px;"></div>
<div class="r" style="left:210.20px;top:153.00px;width:25.00px;height:4.60px;background:#d9dee2;border-radius:2px;"></div>
<div class="r" style="left:122.80px;top:153.00px;width:37.60px;height:24.60px;background:#eceff0;"></div>
<div class="r" style="left:10.00px;top:183.20px;width:225.00px;height:1.80px;background:#e6eaec;"></div>
<div class="r" style="left:10.00px;top:190.40px;width:25.00px;height:4.60px;background:#d9dee2;border-radius:2px;"></div>
<div class="r" style="left:47.80px;top:190.40px;width:25.00px;height:4.60px;background:#d9dee2;border-radius:2px;"></div>
<div class="r" style="left:85.30px;top:190.40px;width:25.00px;height:4.60px;background:#d9dee2;border-radius:2px;"></div>
<div class="r" style="left:172.70px;top:190.40px;width:25.00px;height:4.60px;background:#d9dee2;border-radius:2px;"></div>
<div class="r" style="left:210.20px;top:190.40px;width:25.00px;height:4.60px;background:#d9dee2;border-radius:2px;"></div>
<div class="r" style="left:122.80px;top:190.40px;width:37.60px;height:24.60px;background:#eceff0;"></div>
<div class="r" style="left:10.00px;top:220.60px;width:225.00px;height:1.80px;background:#e6eaec;"></div>
<div class="r" style="left:10.00px;top:228.00px;width:25.00px;height:4.60px;background:#d9dee2;border-radius:2px;"></div>
<div class="r" style="left:47.80px;top:228.00px;width:25.00px;height:4.60px;background:#d9dee2;border-radius:2px;"></div>
<div class="r" style="left:85.30px;top:228.00px;width:25.00px;height:4.60px;background:#d9dee2;border-radius:2px;"></div>
<div class="r" style="left:172.70px;top:228.00px;width:25.00px;height:4.60px;background:#d9dee2;border-radius:2px;"></div>
<div class="r" style="left:210.20px;top:228.00px;width:25.00px;height:4.60px;background:#d9dee2;border-radius:2px;"></div>
<div class="r" style="left:122.80px;top:228.00px;width:37.60px;height:24.60px;background:#eceff0;"></div>
</div>
<div class="r" style="left:1617px;top:740px;width:246px;height:345px;border:2px solid #b4bfc6;border-radius:6px;background:#fff;overflow:hidden;">
<div class="r" style="left:10.00px;top:10.00px;width:69.00px;height:12.00px;background:#eceff0;border-radius:1px;"></div>
<div class="r" style="left:154.00px;top:10.00px;width:81.00px;height:25.00px;background:#eceff0;border-radius:1px;"></div>
<div class="r" style="left:10.00px;top:55.30px;width:225.00px;height:15.40px;background:#d9dee2;"></div>
<div class="r" style="left:10.00px;top:75.30px;width:6.50px;height:4.70px;background:#d9dee2;border-radius:1.5px;"></div>
<div class="r" style="left:23.00px;top:75.30px;width:37.20px;height:4.70px;background:#d9dee2;border-radius:2px;"></div>
<div class="r" style="left:72.5px;top:75.30px;width:5px;height:5px;border-radius:50%;background:#d9dee2;"></div>
<div class="r" style="left:80.20px;top:75.30px;width:37.50px;height:4.70px;background:#d9dee2;border-radius:2px;"></div>
<div class="r" style="left:130.30px;top:75.30px;width:37.50px;height:4.70px;background:#d9dee2;border-radius:2px;"></div>
<div class="r" style="left:72.5px;top:87.90px;width:5px;height:5px;border-radius:50%;background:#8e9ba2;"></div>
<div class="r" style="left:80.20px;top:87.90px;width:37.50px;height:4.70px;background:#d9dee2;border-radius:2px;"></div>
<svg class="r" style="left:192.90px;top:75.20px" width="30" height="30" viewBox="0 0 30 30" fill="none"><circle cx="15" cy="15" r="11.2" stroke="#d9dee2" stroke-width="7.4"/><circle cx="15" cy="15" r="11.2" stroke="#8e9ba2" stroke-width="7.4" stroke-dasharray="17.59 70.37" transform="rotate(-90 15 15)"/></svg>
<div class="r" style="left:10.00px;top:111.30px;width:225.00px;height:1.60px;background:#e6eaec;"></div>
<div class="r" style="left:10.00px;top:117.80px;width:6.50px;height:4.70px;background:#d9dee2;border-radius:1.5px;"></div>
<div class="r" style="left:23.00px;top:117.80px;width:37.20px;height:4.70px;background:#d9dee2;border-radius:2px;"></div>
<div class="r" style="left:72.5px;top:117.80px;width:5px;height:5px;border-radius:50%;background:#d9dee2;"></div>
<div class="r" style="left:80.20px;top:117.80px;width:37.50px;height:4.70px;background:#d9dee2;border-radius:2px;"></div>
<div class="r" style="left:130.30px;top:117.80px;width:37.50px;height:4.70px;background:#d9dee2;border-radius:2px;"></div>
<div class="r" style="left:72.5px;top:130.40px;width:5px;height:5px;border-radius:50%;background:#8e9ba2;"></div>
<div class="r" style="left:80.20px;top:130.40px;width:37.50px;height:4.70px;background:#d9dee2;border-radius:2px;"></div>
<svg class="r" style="left:192.90px;top:117.70px" width="30" height="30" viewBox="0 0 30 30" fill="none"><circle cx="15" cy="15" r="11.2" stroke="#d9dee2" stroke-width="7.4"/><circle cx="15" cy="15" r="11.2" stroke="#8e9ba2" stroke-width="7.4" stroke-dasharray="17.59 70.37" transform="rotate(-90 15 15)"/></svg>
<div class="r" style="left:10.00px;top:153.80px;width:225.00px;height:1.60px;background:#e6eaec;"></div>
<div class="r" style="left:10.00px;top:160.30px;width:6.50px;height:4.70px;background:#d9dee2;border-radius:1.5px;"></div>
<div class="r" style="left:23.00px;top:160.30px;width:37.20px;height:4.70px;background:#d9dee2;border-radius:2px;"></div>
<div class="r" style="left:72.5px;top:160.30px;width:5px;height:5px;border-radius:50%;background:#d9dee2;"></div>
<div class="r" style="left:80.20px;top:160.30px;width:37.50px;height:4.70px;background:#d9dee2;border-radius:2px;"></div>
<div class="r" style="left:130.30px;top:160.30px;width:37.50px;height:4.70px;background:#d9dee2;border-radius:2px;"></div>
<div class="r" style="left:72.5px;top:172.90px;width:5px;height:5px;border-radius:50%;background:#8e9ba2;"></div>
<div class="r" style="left:80.20px;top:172.90px;width:37.50px;height:4.70px;background:#d9dee2;border-radius:2px;"></div>
<svg class="r" style="left:192.90px;top:160.20px" width="30" height="30" viewBox="0 0 30 30" fill="none"><circle cx="15" cy="15" r="11.2" stroke="#d9dee2" stroke-width="7.4"/><circle cx="15" cy="15" r="11.2" stroke="#8e9ba2" stroke-width="7.4" stroke-dasharray="35.19 70.37" transform="rotate(-90 15 15)"/></svg>
<div class="r" style="left:10.00px;top:196.30px;width:225.00px;height:1.60px;background:#e6eaec;"></div>
<div class="r" style="left:10.00px;top:202.80px;width:6.50px;height:4.70px;background:#d9dee2;border-radius:1.5px;"></div>
<div class="r" style="left:23.00px;top:202.80px;width:37.20px;height:4.70px;background:#d9dee2;border-radius:2px;"></div>
<div class="r" style="left:72.5px;top:202.80px;width:5px;height:5px;border-radius:50%;background:#d9dee2;"></div>
<div class="r" style="left:80.20px;top:202.80px;width:37.50px;height:4.70px;background:#d9dee2;border-radius:2px;"></div>
<div class="r" style="left:130.30px;top:202.80px;width:37.50px;height:4.70px;background:#d9dee2;border-radius:2px;"></div>
<div class="r" style="left:72.5px;top:215.40px;width:5px;height:5px;border-radius:50%;background:#8e9ba2;"></div>
<div class="r" style="left:80.20px;top:215.40px;width:37.50px;height:4.70px;background:#d9dee2;border-radius:2px;"></div>
<div class="r" style="left:72.5px;top:228.00px;width:5px;height:5px;border-radius:50%;background:#b5bdc4;"></div>
<div class="r" style="left:80.20px;top:228.00px;width:37.50px;height:4.70px;background:#d9dee2;border-radius:2px;"></div>
<svg class="r" style="left:192.90px;top:202.70px" width="30" height="30" viewBox="0 0 30 30" fill="none"><circle cx="15" cy="15" r="11.2" stroke="#d9dee2" stroke-width="7.4"/><circle cx="15" cy="15" r="11.2" stroke="#8e9ba2" stroke-width="7.4" stroke-dasharray="17.59 70.37" transform="rotate(-90 15 15)"/><circle cx="15" cy="15" r="11.2" stroke="#b5bdc4" stroke-width="7.4" stroke-dasharray="0 17.59 17.59 70.37" transform="rotate(-90 15 15)"/></svg>
<div class="r" style="left:10.00px;top:238.80px;width:225.00px;height:1.60px;background:#e6eaec;"></div>
<div class="r" style="left:10.00px;top:245.30px;width:6.50px;height:4.70px;background:#d9dee2;border-radius:1.5px;"></div>
<div class="r" style="left:23.00px;top:245.30px;width:37.20px;height:4.70px;background:#d9dee2;border-radius:2px;"></div>
<div class="r" style="left:72.5px;top:245.30px;width:5px;height:5px;border-radius:50%;background:#d9dee2;"></div>
<div class="r" style="left:80.20px;top:245.30px;width:37.50px;height:4.70px;background:#d9dee2;border-radius:2px;"></div>
<div class="r" style="left:130.30px;top:245.30px;width:37.50px;height:4.70px;background:#d9dee2;border-radius:2px;"></div>
<div class="r" style="left:72.5px;top:257.90px;width:5px;height:5px;border-radius:50%;background:#8e9ba2;"></div>
<div class="r" style="left:80.20px;top:257.90px;width:37.50px;height:4.70px;background:#d9dee2;border-radius:2px;"></div>
<svg class="r" style="left:192.90px;top:245.20px" width="30" height="30" viewBox="0 0 30 30" fill="none"><circle cx="15" cy="15" r="11.2" stroke="#d9dee2" stroke-width="7.4"/><circle cx="15" cy="15" r="11.2" stroke="#8e9ba2" stroke-width="7.4" stroke-dasharray="35.19 70.37" transform="rotate(-90 15 15)"/></svg>
<div class="r" style="left:10.00px;top:281.30px;width:225.00px;height:1.60px;background:#e6eaec;"></div>
</div>
<div class="r" style="left:1897.5px;top:740.6px;width:244.5px;height:345px;border:2px solid #b4bfc6;border-radius:6px;background:#fff;overflow:hidden;">
<div class="r" style="left:9.60px;top:9.70px;width:68.70px;height:12.50px;background:#eceff0;"></div>
<div class="r" style="left:153.30px;top:9.70px;width:81.50px;height:25.10px;background:#eceff0;"></div>
<div class="r" style="left:46.10px;top:96.30px;width:149.90px;height:149.60px;background:#eceff0;border-radius:2px;"></div>
<svg class="r" style="left:68.80px;top:129.40px" width="104.5" height="82.8" viewBox="0 0 104.5 82.8" fill="none"><rect x="5.25" y="5.25" width="94.0" height="72.3" rx="11.55" stroke="#b5bdc4" stroke-width="10.5"/><polygon points="20.90,63.34 33.44,43.88 47.02,54.65 64.79,34.78 85.69,63.34" fill="#b5bdc4"/></svg>
<div class="r" style="left:77.10px;top:260.80px;width:87.50px;height:10.20px;background:#eceff0;"></div>
</div>
<div class="r" style="left:1895.4px;top:1014.5px;width:252.5px;height:75px;background:#fff;border:1px solid #c7d1d8;border-radius:5px;"></div>
<div class="t" style="left:1901.50px;top:1024.67px;font-size:17.4px;color:#28323a;font-weight:400;">Report template</div>
<div class="r" style="left:1901.4px;top:1046.2px;width:239.5px;height:36px;border:1.5px solid #52677a;border-radius:5px;background:#fff;"></div>
<div class="t" style="left:1912.50px;top:1057.57px;font-size:17.4px;color:#1e262d;font-weight:400;">RFI</div>
<svg class="r" style="left:2106.00px;top:1056.00px;" width="22" height="18" viewBox="0 0 22 18" fill="none" stroke="#3e5465" stroke-width="2" stroke-linecap="round" stroke-linejoin="round"><polyline points="4,5 11,12 18,5" stroke-width="2.8"/></svg>
<svg class="r" style="left:2103px;top:1078px" width="28" height="28" viewBox="0 0 28 28"><path d="M9 14 L9 4.5 A1.8 1.8 0 0 1 12.6 4.5 L12.6 12 L12.6 10 A1.8 1.8 0 0 1 16 10 L16 12.5 A1.8 1.8 0 0 1 19.3 12.5 L19.3 13.5 A1.8 1.8 0 0 1 22.5 13.5 L22.5 19 C22.5 23 20 26 16 26 L13 26 C10 26 8.5 24 7 21.5 L4.3 16.5 A1.7 1.7 0 0 1 7.2 14.8 Z" fill="#fff" stroke="#111" stroke-width="1.4" stroke-linejoin="round"/><line x1="12.6" y1="12" x2="12.6" y2="18" stroke="#111" stroke-width="1.1"/><line x1="16" y1="12.5" x2="16" y2="18" stroke="#111" stroke-width="1.1"/><line x1="19.3" y1="13.5" x2="19.3" y2="18" stroke="#111" stroke-width="1.1"/></svg>
<div class="r" style="left:366.00px;top:1111.50px;width:1912.50px;height:1.20px;background:#dbe2e7;"></div>
<div class="t" style="left:397.40px;top:1134.80px;font-size:17.6px;color:#3d5466;font-weight:400;-webkit-text-stroke:0.45px #3d5466;">Your prints</div>
<div class="r" style="left:1667.2px;top:1132.2px;width:21.5px;height:22.2px;box-sizing:border-box;border:1.5px solid #6b7d89;border-radius:3px;"></div>
<div class="t" style="left:1701.00px;top:1135.49px;font-size:17.5px;color:#28323a;font-weight:400;">Notify me by email when the print is complete</div>
<div class="r" style="left:2083.6px;top:1123px;width:95px;height:39.3px;box-sizing:border-box;border:1.5px solid #3e5262;border-radius:5px;"></div>
<div class="t" style="left:1631.20px;width:1000px;text-align:center;top:1135.54px;font-size:17.2px;color:#3e5465;font-weight:400;-webkit-text-stroke:0.55px #3e5465;">Cancel</div>
<div class="r" style="left:2189px;top:1123px;width:80px;height:39.5px;background:#8cc63f;border-radius:5px;"></div>
<div class="t" style="left:1729.00px;width:1000px;text-align:center;top:1135.54px;font-size:17.2px;color:#ffffff;font-weight:400;-webkit-text-stroke:0.55px #ffffff;">Print</div>
</body></html>
